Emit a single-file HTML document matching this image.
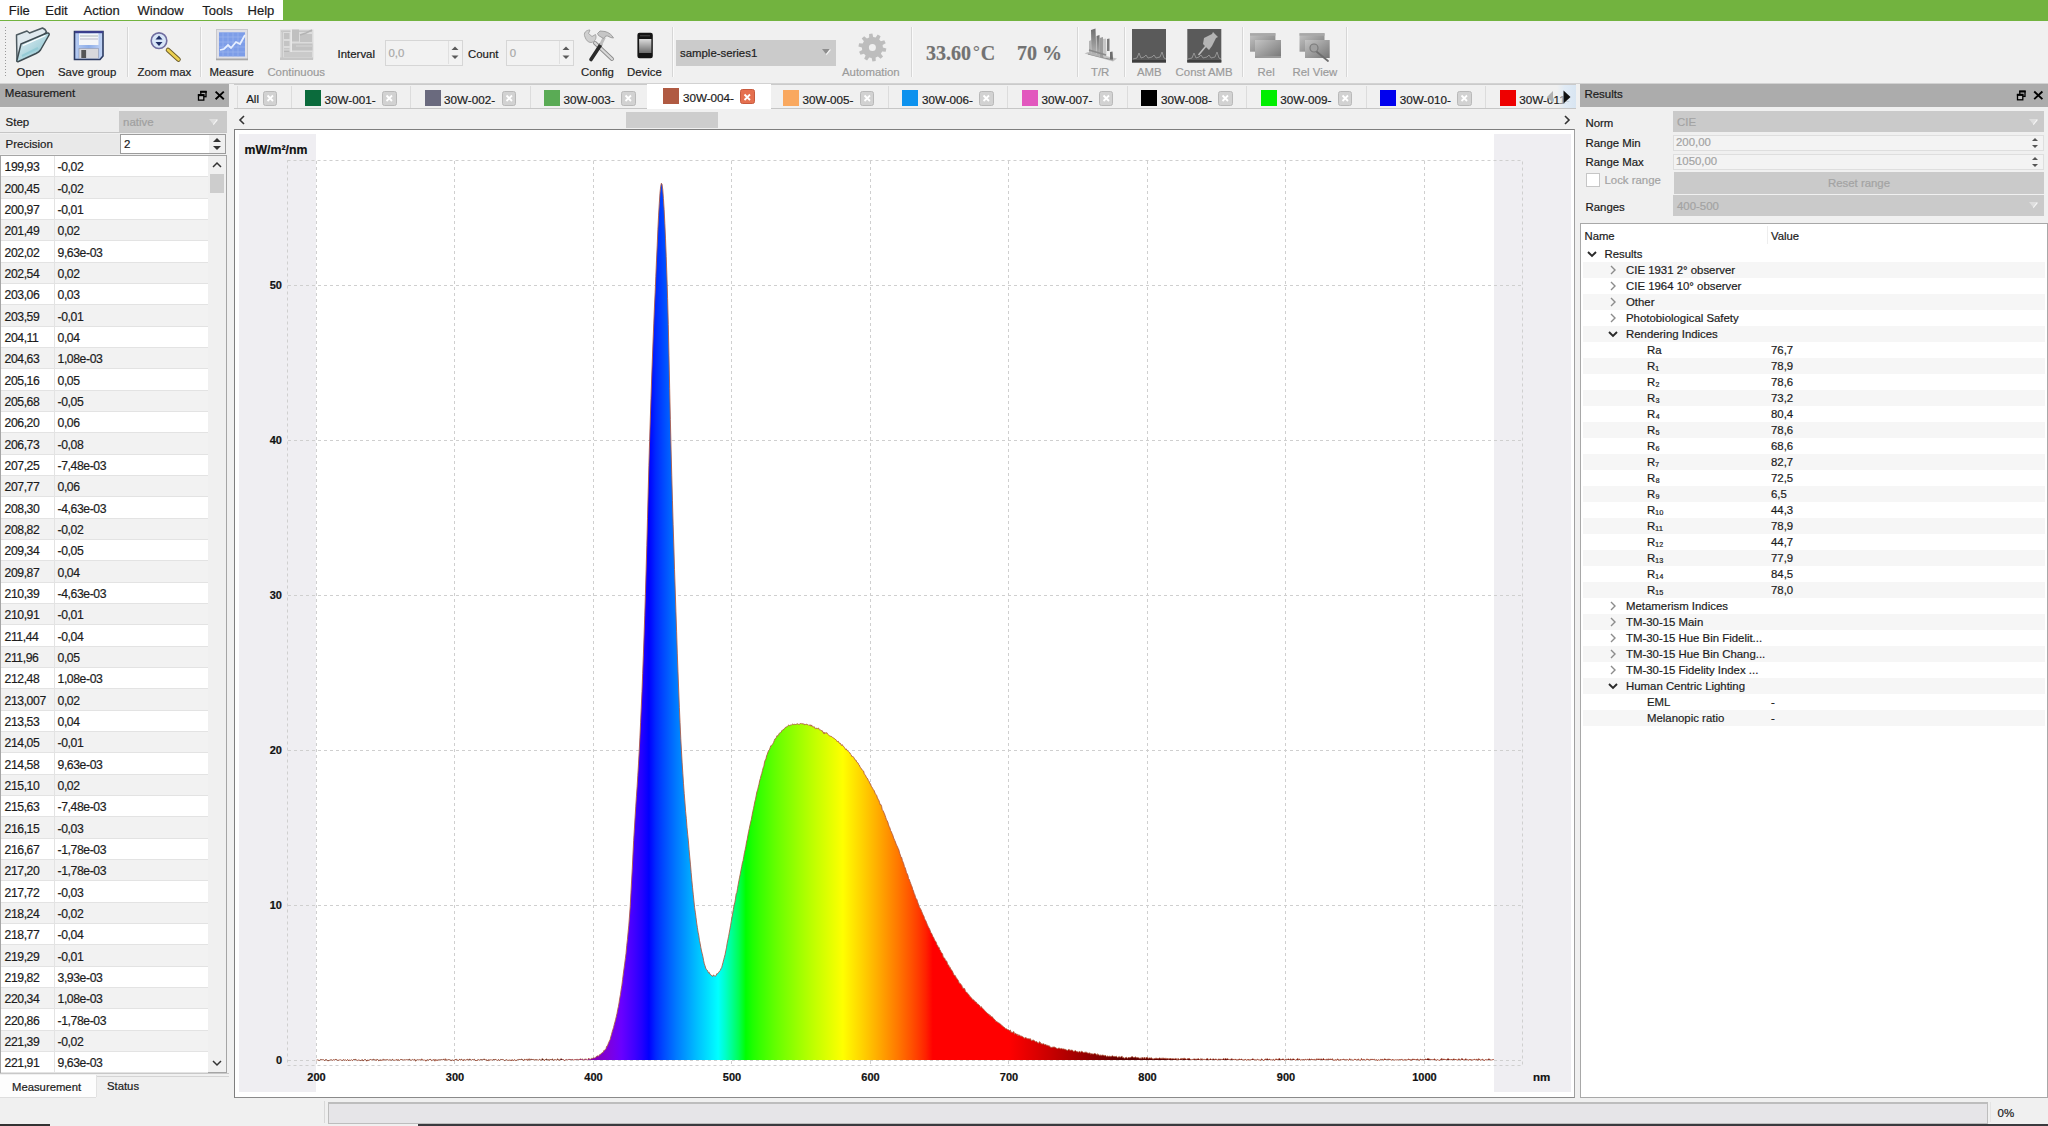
<!DOCTYPE html><html><head><meta charset="utf-8"><style>
html,body{margin:0;padding:0;width:2048px;height:1126px;overflow:hidden;background:#f0f0f0;position:relative;font-family:"Liberation Sans",sans-serif}
.t{position:absolute;white-space:nowrap;line-height:1;-webkit-text-stroke:0.2px currentColor;}
</style></head><body>
<div style="position:absolute;left:0px;top:0px;width:2048px;height:21px;background:#72b33f"></div>
<div style="position:absolute;left:0px;top:0px;width:283px;height:20px;background:#ffffff"></div>
<div class="t" style="left:8.8px;top:3.8px;font-size:13px;color:#1b1b1b;font-weight:400;">File</div>
<div class="t" style="left:45.3px;top:3.8px;font-size:13px;color:#1b1b1b;font-weight:400;">Edit</div>
<div class="t" style="left:83.6px;top:3.8px;font-size:13px;color:#1b1b1b;font-weight:400;">Action</div>
<div class="t" style="left:137.5px;top:3.8px;font-size:13px;color:#1b1b1b;font-weight:400;">Window</div>
<div class="t" style="left:202.3px;top:3.8px;font-size:13px;color:#1b1b1b;font-weight:400;">Tools</div>
<div class="t" style="left:247.6px;top:3.8px;font-size:13px;color:#1b1b1b;font-weight:400;">Help</div>
<div style="position:absolute;left:0px;top:21px;width:2048px;height:62px;background:#f0f0f0"></div>
<div style="position:absolute;left:0px;top:83px;width:2048px;height:1px;background:#d2d2d2"></div>
<div style="position:absolute;left:5px;top:27px;width:1px;height:51px;background:repeating-linear-gradient(#9a9a9a 0 1px,transparent 1px 3px)"></div>
<div style="position:absolute;left:127px;top:27px;width:1px;height:50px;background:#d6d6d6;box-shadow:1px 0 0 #fafafa"></div>
<div style="position:absolute;left:200px;top:27px;width:1px;height:50px;background:#d6d6d6;box-shadow:1px 0 0 #fafafa"></div>
<div style="position:absolute;left:671.6px;top:27px;width:1px;height:50px;background:#d6d6d6;box-shadow:1px 0 0 #fafafa"></div>
<div style="position:absolute;left:911.4px;top:27px;width:1px;height:50px;background:#d6d6d6;box-shadow:1px 0 0 #fafafa"></div>
<div style="position:absolute;left:1076.5px;top:27px;width:1px;height:50px;background:#d6d6d6;box-shadow:1px 0 0 #fafafa"></div>
<div style="position:absolute;left:1124.4px;top:27px;width:1px;height:50px;background:#d6d6d6;box-shadow:1px 0 0 #fafafa"></div>
<div style="position:absolute;left:1242px;top:27px;width:1px;height:50px;background:#d6d6d6;box-shadow:1px 0 0 #fafafa"></div>
<div style="position:absolute;left:1345.5px;top:27px;width:1px;height:50px;background:#d6d6d6;box-shadow:1px 0 0 #fafafa"></div>
<div class="t" style="left:16.6px;top:66.8px;font-size:11.4px;color:#1e1e1e;font-weight:400;">Open</div>
<div class="t" style="left:58.0px;top:66.8px;font-size:11.4px;color:#1e1e1e;font-weight:400;">Save group</div>
<div class="t" style="left:137.5px;top:66.8px;font-size:11.4px;color:#1e1e1e;font-weight:400;">Zoom max</div>
<div class="t" style="left:209.6px;top:66.8px;font-size:11.4px;color:#1e1e1e;font-weight:400;">Measure</div>
<div class="t" style="left:267.4px;top:66.8px;font-size:11.4px;color:#9b9b9b;font-weight:400;">Continuous</div>
<div class="t" style="left:581.0px;top:66.8px;font-size:11.4px;color:#1e1e1e;font-weight:400;">Config</div>
<div class="t" style="left:627.0px;top:66.8px;font-size:11.4px;color:#1e1e1e;font-weight:400;">Device</div>
<div class="t" style="left:842.0px;top:66.8px;font-size:11.4px;color:#9b9b9b;font-weight:400;">Automation</div>
<div class="t" style="left:1091.0px;top:66.8px;font-size:11.4px;color:#9b9b9b;font-weight:400;">T/R</div>
<div class="t" style="left:1137.0px;top:66.8px;font-size:11.4px;color:#9b9b9b;font-weight:400;">AMB</div>
<div class="t" style="left:1175.6px;top:66.8px;font-size:11.4px;color:#9b9b9b;font-weight:400;">Const AMB</div>
<div class="t" style="left:1257.6px;top:66.8px;font-size:11.4px;color:#9b9b9b;font-weight:400;">Rel</div>
<div class="t" style="left:1292.5px;top:66.8px;font-size:11.4px;color:#9b9b9b;font-weight:400;">Rel View</div>
<div class="t" style="left:337.6px;top:48.5px;font-size:11.4px;color:#1a1a1a;font-weight:400;">Interval</div>
<div class="t" style="left:468.0px;top:48.5px;font-size:11.4px;color:#1a1a1a;font-weight:400;">Count</div>
<div style="position:absolute;left:384.5px;top:39.5px;width:78.5px;height:26px;box-sizing:border-box;border:1px solid #d6d6d6;background:#f2f2f2"></div>
<div class="t" style="left:388.5px;top:48.3px;font-size:11.4px;color:#a8a8a8;font-weight:400;">0,0</div>
<svg style="position:absolute;left:450px;top:43px" width="10" height="20"><path d="M1.5,7 L5,3.5 L8.5,7 Z" fill="#5a5a5a"/><path d="M1.5,12.5 L5,16 L8.5,12.5 Z" fill="#5a5a5a"/></svg>
<div style="position:absolute;left:448px;top:41px;width:1px;height:23px;background:#e0e0e0"></div>
<div style="position:absolute;left:505.8px;top:39.5px;width:68.19999999999999px;height:26px;box-sizing:border-box;border:1px solid #d6d6d6;background:#f2f2f2"></div>
<div class="t" style="left:509.8px;top:48.3px;font-size:11.4px;color:#a8a8a8;font-weight:400;">0</div>
<svg style="position:absolute;left:561px;top:43px" width="10" height="20"><path d="M1.5,7 L5,3.5 L8.5,7 Z" fill="#5a5a5a"/><path d="M1.5,12.5 L5,16 L8.5,12.5 Z" fill="#5a5a5a"/></svg>
<div style="position:absolute;left:559px;top:41px;width:1px;height:23px;background:#e0e0e0"></div>
<div style="position:absolute;left:675.6px;top:39.5px;width:160.7px;height:26px;background:#cbcbcb"></div>
<div class="t" style="left:680.0px;top:47.8px;font-size:11.4px;color:#1e1e1e;font-weight:400;">sample-series1</div>
<svg style="position:absolute;left:820px;top:47px" width="12" height="10"><path d="M2,2 L10,2 L6,7 Z" fill="#8e8e8e"/><path d="M6,7 L10,2 L10.8,3 L6.5,8.2 Z" fill="#f4f4f4"/></svg>
<div class="t" style="left:926px;top:42.5px;font-family:'Liberation Serif',serif;font-size:20px;font-weight:700;color:#727272">33.60<span style="font-size:17px;position:relative;top:-3px;margin:0 1px 0 2px;font-weight:400">°</span>C</div>
<div class="t" style="left:1017px;top:42.5px;font-family:'Liberation Serif',serif;font-size:20px;font-weight:700;color:#727272">70 %</div>
<svg style="position:absolute;left:0;top:0" width="1400" height="84" viewBox="0 0 1400 84">
<defs>
<linearGradient id="fold" x1="0" y1="0" x2="1" y2="1"><stop offset="0" stop-color="#e8f2f6"/><stop offset="0.6" stop-color="#a9d3dc"/><stop offset="1" stop-color="#7fb3c4"/></linearGradient>
<linearGradient id="flop" x1="0" y1="0" x2="1" y2="0"><stop offset="0" stop-color="#b8cdf4"/><stop offset="0.5" stop-color="#8eaee8"/><stop offset="1" stop-color="#c4d6f6"/></linearGradient>
<linearGradient id="phone" x1="0" y1="0" x2="0" y2="1"><stop offset="0" stop-color="#dcdcdc"/><stop offset="1" stop-color="#6c6c6c"/></linearGradient>
<linearGradient id="win" x1="0" y1="0" x2="1" y2="1"><stop offset="0" stop-color="#c4c4c4"/><stop offset="1" stop-color="#767676"/></linearGradient>
<linearGradient id="bars" x1="0" y1="0" x2="1" y2="0"><stop offset="0" stop-color="#9a9a9a"/><stop offset="1" stop-color="#dcdcdc"/></linearGradient>
</defs>
<!-- Open folder -->
<path d="M16.5,35 L27,31 L29.5,33 L42.5,28 L45,29.5 L46.5,32 L21,56 L17,61 Z" fill="#dfe9ee" stroke="#4d5a60" stroke-width="1.5" stroke-linejoin="round"/>
<path d="M21,44 L47,33 C49,32.5 50,34 48.5,36 L40.5,50 C39.5,51.5 38,52.5 36,53.5 L18.5,61.5 C17,62 16.5,61 17,60 Z" fill="url(#fold)" stroke="#3f4c52" stroke-width="1.5" stroke-linejoin="round"/>
<path d="M23,45.5 L45.5,35.5" stroke="#ffffff" stroke-width="1.3"/>
<path d="M22,56 L38,48" stroke="#8fc9d4" stroke-width="2" opacity="0.8"/>
<!-- Floppy -->
<path d="M74.5,31.5 H103 V56 L100,59.5 H74.5 Z" fill="url(#flop)" stroke="#2c3b62" stroke-width="1.6"/>
<rect x="75" y="31" width="28" height="2.2" fill="#3b3f8c"/>
<rect x="79" y="33.5" width="19.5" height="11.5" fill="#f4f6f8"/>
<line x1="80" y1="36" x2="98" y2="36" stroke="#9aa" stroke-width="0.8"/>
<line x1="80" y1="39" x2="98" y2="39" stroke="#aab" stroke-width="0.8"/>
<rect x="79" y="48.5" width="19.5" height="10" fill="#d8d8dc" stroke="#9098b0" stroke-width="0.6"/>
<rect x="81.3" y="50" width="4.8" height="8" fill="#555"/>
<!-- Zoom max -->
<line x1="168" y1="50" x2="178.5" y2="59.5" stroke="#6a5a28" stroke-width="4.6" stroke-linecap="round"/>
<line x1="168" y1="50" x2="178.5" y2="59.5" stroke="#ecd050" stroke-width="2.8" stroke-linecap="round"/>
<circle cx="159" cy="40.7" r="7.8" fill="#d8e6f8" stroke="#706ea0" stroke-width="1.6"/>
<path d="M159,35.5 L162.5,39.5 H155.5 Z" fill="#1e2e66"/>
<path d="M159,46 L162.5,42 H155.5 Z" fill="#1e2e66"/>
<!-- Measure -->
<rect x="216.5" y="29.5" width="31" height="30" fill="#e0e0e6" stroke="#c8c8cc" stroke-width="1"/>
<rect x="219" y="32.3" width="26" height="24.2" fill="#7d9de8"/>
<g stroke="#9cb4ee" stroke-width="0.7"><line x1="223" y1="32" x2="223" y2="56.5"/><line x1="228" y1="32" x2="228" y2="56.5"/><line x1="233" y1="32" x2="233" y2="56.5"/><line x1="238" y1="32" x2="238" y2="56.5"/><line x1="219" y1="37" x2="245" y2="37"/><line x1="219" y1="42" x2="245" y2="42"/><line x1="219" y1="47" x2="245" y2="47"/><line x1="219" y1="52" x2="245" y2="52"/></g>
<path d="M220,50 L224,49 L228,45 L231,48 L236,42 L240,44 L245,35" fill="none" stroke="#e8f0ff" stroke-width="1.8"/>
<rect x="216" y="58.5" width="32" height="1.8" fill="#a8a8a8"/>
<!-- Continuous (disabled) -->
<rect x="280" y="29.5" width="33.5" height="30" fill="#dcdcdc"/>
<rect x="281" y="30.5" width="31" height="1.5" fill="#c4c4c4"/>
<rect x="281.5" y="31" width="1.6" height="27" fill="#c8c8c8"/>
<rect x="284" y="33" width="5.5" height="6" fill="#c2c2c2"/>
<rect x="284" y="41" width="5.5" height="5" fill="#c4c4c4"/>
<rect x="284" y="48" width="5.5" height="1.5" fill="#c8c8c8"/>
<rect x="284" y="50.5" width="5.5" height="2.5" fill="#b8b8b8"/>
<rect x="290.5" y="29" width="1.5" height="27" fill="#e8e8e8"/>
<rect x="292" y="29.5" width="7" height="12" fill="#c0c0c0"/>
<rect x="300" y="34" width="12" height="8" fill="#c4c4c4"/>
<path d="M300,35 L306,33 L312,30" fill="none" stroke="#b4b4b4" stroke-width="1.6"/>
<rect x="292" y="43.5" width="20.5" height="7" fill="#c2c2c2"/>
<rect x="296" y="45.5" width="16" height="1" fill="#d6d6d6"/>
<rect x="284" y="52" width="28" height="5" fill="#cacaca"/>
<rect x="280" y="57.5" width="33" height="2.5" fill="#c6c6c6"/>
<!-- Config: wrench + hammer -->
<line x1="595" y1="43" x2="612" y2="59" stroke="#8c8c8c" stroke-width="4" stroke-linecap="round"/>
<line x1="595" y1="43" x2="612" y2="59" stroke="#d8d8d8" stroke-width="2.2" stroke-linecap="round"/>
<path d="M585,37 C583,33 586,30 590,30 L588.5,33.5 L592,36.5 L595.5,34.5 C597,38 595,42 591,42.5 C588,42.5 586,40 585,37 Z" fill="#cfcfcf" stroke="#a0a0a0" stroke-width="0.9"/>
<line x1="600.5" y1="45" x2="591" y2="59.5" stroke="#2b2b2b" stroke-width="3.6" stroke-linecap="round"/>
<line x1="600.5" y1="45" x2="604.5" y2="37" stroke="#bdbdbd" stroke-width="3"/>
<path d="M597.5,33.5 L600,31 L605,31.5 C609,32.5 612,35 613.5,38 L610.5,37.5 C608.5,36 606.5,35.5 605,36.5 L603.5,38.5 L598.5,35.5 Z" fill="#c6c6c6" stroke="#9a9a9a" stroke-width="0.9"/>
<!-- Device phone -->
<rect x="637.4" y="32.8" width="15.4" height="25.5" rx="2.2" fill="#141414"/>
<rect x="639.1" y="39" width="12.3" height="14" fill="url(#phone)"/>
<rect x="640" y="35" width="10" height="1.4" fill="#3c3c3c"/>
<!-- Gear -->
<g transform="translate(872.4,47.5)" fill="#bdbdbd">
<path fill-rule="evenodd" d="M10.50,0.00 L13.96,1.05 L13.31,4.33 L9.71,3.99 L8.49,6.17 L10.67,9.06 L8.23,11.33 L5.51,8.94 L3.24,9.99 L3.31,13.60 L0.00,14.00 L-0.79,10.47 L-3.24,9.99 L-5.32,12.95 L-8.23,11.33 L-6.79,8.01 L-8.49,6.17 L-11.91,7.35 L-13.31,4.33 L-10.20,2.48 L-10.50,0.00 L-13.96,-1.05 L-13.31,-4.33 L-9.71,-3.99 L-8.49,-6.17 L-10.67,-9.06 L-8.23,-11.33 L-5.51,-8.94 L-3.24,-9.99 L-3.31,-13.60 L-0.00,-14.00 L0.79,-10.47 L3.24,-9.99 L5.32,-12.95 L8.23,-11.33 L6.79,-8.01 L8.49,-6.17 L11.91,-7.35 L13.31,-4.33 L10.20,-2.48 Z M3.5,0 A3.5,3.5 0 1,0 -3.5,0 A3.5,3.5 0 1,0 3.5,0 Z"/>
</g>
<!-- T/R -->
<defs><linearGradient id="trb" x1="0" y1="0" x2="0" y2="1"><stop offset="0" stop-color="#6e6e6e"/><stop offset="1" stop-color="#b8b8b8"/></linearGradient></defs>
<path d="M1084.5,53.5 L1088,52 L1117,58.5 L1113,61.5 Z" fill="#c2c2c2"/>
<path d="M1088,54 L1113,60" stroke="#8e8e8e" stroke-width="1.2"/>
<path d="M1089,41 L1091.5,40 L1091.5,55 L1089,54 Z" fill="#b4b4b4"/>
<path d="M1091,30 L1095.5,28.6 L1096.5,56 L1091.5,55 Z" fill="url(#trb)"/>
<path d="M1096.5,36 L1099.5,35 L1100,57 L1096.5,56 Z" fill="url(#trb)"/>
<path d="M1099.5,38 L1103,37 L1103.5,57.5 L1100,57 Z" fill="#9c9c9c"/>
<path d="M1103,39 L1106,38.5 L1106.5,58 L1103.5,57.5 Z" fill="#c6c6c6"/>
<path d="M1107,39 L1109.5,38.5 L1109.5,51 L1107,51 Z" fill="#7a7a7a"/>
<path d="M1110,52 L1112.5,51.5 L1113,59.5 L1110,59 Z" fill="#6e6e6e"/>
<path d="M1089,50 L1106,55" stroke="#8a8a8a" stroke-width="1.5"/>
<!-- AMB -->
<rect x="1132" y="29" width="34" height="33.5" fill="#5a5a5a"/>
<rect x="1132" y="60" width="34" height="2.5" fill="#3e3e3e"/>
<path d="M1133,59 L1137,58 L1139,53 L1141,58 L1144,57 L1146,55 L1148,58 L1152,57 L1154,55 L1156,58 L1160,57 L1162,52 L1164,58 L1166,59" fill="none" stroke="#9a9a9a" stroke-width="0.9"/>
<!-- Const AMB -->
<rect x="1187.3" y="29" width="34" height="33.5" fill="#5a5a5a"/>
<rect x="1187.3" y="60" width="34" height="2.5" fill="#3e3e3e"/>
<path d="M1188,59 L1192,58 L1194,53 L1196,58 L1199,57 L1201,55 L1203,58 L1207,57 L1209,55 L1211,58 L1215,57 L1217,52 L1219,58 L1221,59" fill="none" stroke="#9a9a9a" stroke-width="0.9"/>
<line x1="1198.5" y1="55" x2="1206" y2="46" stroke="#bcbcbc" stroke-width="1.6"/>
<path d="M1203,44 L1209,50 L1212,46 L1216,38 L1218,37 L1213,32 L1212,34 L1204,38 Z" fill="#b4b4b4"/>
<!-- Rel -->
<rect x="1250" y="33.2" width="25.4" height="18.5" fill="url(#win)"/>
<rect x="1250" y="33.2" width="25.4" height="2.5" fill="#a8a8a8"/>
<rect x="1255" y="40" width="26" height="18" fill="url(#win)"/>
<rect x="1255" y="56" width="26" height="2" fill="#9a9a9a"/>
<!-- Rel View -->
<rect x="1299.5" y="33.2" width="25" height="18.5" fill="url(#win)"/>
<rect x="1299.5" y="33.2" width="25" height="2.5" fill="#a8a8a8"/>
<rect x="1305" y="40" width="24.7" height="18" fill="url(#win)"/>
<circle cx="1314" cy="48" r="4" fill="#a0a0a0" stroke="#7a7a7a" stroke-width="1.2"/>
<line x1="1317" y1="52" x2="1328" y2="61" stroke="#6e6e6e" stroke-width="1.8" stroke-linecap="round"/>
</svg>

<div style="position:absolute;left:0px;top:84px;width:229px;height:23px;background:#acacac"></div>
<div class="t" style="left:4.8px;top:88.3px;font-size:11.5px;color:#1c1c1c;font-weight:400;">Measurement</div>
<svg style="position:absolute;left:0;top:0" width="2048" height="110"><rect x="200.8" y="91.5" width="5.2" height="5.2" fill="none" stroke="#000" stroke-width="1.3"/><rect x="200.20000000000002" y="90.9" width="6.5" height="1.9" fill="#000"/><rect x="198.5" y="94.8" width="5.3" height="5.3" fill="#b8b8b8" stroke="#000" stroke-width="1.3"/><rect x="197.9" y="94.2" width="6.5" height="2" fill="#000"/><path d="M215.6,91.6 L223.79999999999998,99.19999999999999 M223.79999999999998,91.6 L215.6,99.19999999999999" stroke="#000" stroke-width="1.9"/></svg>
<div style="position:absolute;left:0px;top:108px;width:119px;height:25px;background:#ededed"></div>
<div style="position:absolute;left:0px;top:134px;width:120px;height:20px;background:#e9e9e9"></div>
<div class="t" style="left:5.6px;top:117.3px;font-size:11.5px;color:#1c1c1c;font-weight:400;">Step</div>
<div style="position:absolute;left:119px;top:111px;width:107.5px;height:22px;background:#cacaca"></div>
<div class="t" style="left:123.0px;top:117.3px;font-size:11.5px;color:#a0a0a0;font-weight:400;">native</div>
<svg style="position:absolute;left:207px;top:117px" width="12" height="10"><path d="M2,2 L10,2 L6,7 Z" fill="#dedede"/><path d="M6,7 L10,2 L10.8,3 L6.5,8.2 Z" fill="#f6f6f6"/></svg>
<div style="position:absolute;left:0px;top:132px;width:227px;height:1.2px;background:#c6c6c6"></div>
<div class="t" style="left:5.6px;top:139.3px;font-size:11.5px;color:#1c1c1c;font-weight:400;">Precision</div>
<div style="position:absolute;left:120px;top:134px;width:106px;height:20px;box-sizing:border-box;border:1px solid #9c9c9c;background:#fff"></div>
<div class="t" style="left:124.0px;top:139.3px;font-size:11.5px;color:#1c1c1c;font-weight:400;">2</div>
<svg style="position:absolute;left:209px;top:135px" width="16" height="18"><rect x="0" y="0" width="16" height="18" fill="#f0f0f0"/><path d="M4,7 L8,3 L12,7 Z" fill="#333"/><path d="M4,11 L8,15 L12,11 Z" fill="#333"/></svg>
<div style="position:absolute;left:0px;top:155px;width:227px;height:918px;box-sizing:border-box;border:1px solid #a5a5a5;background:#fff"></div>
<div style="position:absolute;left:1px;top:176.3px;width:207px;height:1px;background:#e3e3e3"></div>
<div class="t" style="left:4.5px;top:161.3px;font-size:12.2px;color:#1c1c1c;font-weight:400;letter-spacing:-0.4px">199,93</div>
<div class="t" style="left:57.5px;top:161.3px;font-size:12.2px;color:#1c1c1c;font-weight:400;letter-spacing:-0.4px">-0,02</div>
<div style="position:absolute;left:1px;top:177.3px;width:207px;height:21.33px;background:#f2f2f2"></div>
<div style="position:absolute;left:1px;top:197.7px;width:207px;height:1px;background:#e3e3e3"></div>
<div class="t" style="left:4.5px;top:182.6px;font-size:12.2px;color:#1c1c1c;font-weight:400;letter-spacing:-0.4px">200,45</div>
<div class="t" style="left:57.5px;top:182.6px;font-size:12.2px;color:#1c1c1c;font-weight:400;letter-spacing:-0.4px">-0,02</div>
<div style="position:absolute;left:1px;top:219.0px;width:207px;height:1px;background:#e3e3e3"></div>
<div class="t" style="left:4.5px;top:203.9px;font-size:12.2px;color:#1c1c1c;font-weight:400;letter-spacing:-0.4px">200,97</div>
<div class="t" style="left:57.5px;top:203.9px;font-size:12.2px;color:#1c1c1c;font-weight:400;letter-spacing:-0.4px">-0,01</div>
<div style="position:absolute;left:1px;top:220.0px;width:207px;height:21.33px;background:#f2f2f2"></div>
<div style="position:absolute;left:1px;top:240.3px;width:207px;height:1px;background:#e3e3e3"></div>
<div class="t" style="left:4.5px;top:225.3px;font-size:12.2px;color:#1c1c1c;font-weight:400;letter-spacing:-0.4px">201,49</div>
<div class="t" style="left:57.5px;top:225.3px;font-size:12.2px;color:#1c1c1c;font-weight:400;letter-spacing:-0.4px">0,02</div>
<div style="position:absolute;left:1px;top:261.6px;width:207px;height:1px;background:#e3e3e3"></div>
<div class="t" style="left:4.5px;top:246.6px;font-size:12.2px;color:#1c1c1c;font-weight:400;letter-spacing:-0.4px">202,02</div>
<div class="t" style="left:57.5px;top:246.6px;font-size:12.2px;color:#1c1c1c;font-weight:400;letter-spacing:-0.4px">9,63e-03</div>
<div style="position:absolute;left:1px;top:262.6px;width:207px;height:21.33px;background:#f2f2f2"></div>
<div style="position:absolute;left:1px;top:283.0px;width:207px;height:1px;background:#e3e3e3"></div>
<div class="t" style="left:4.5px;top:267.9px;font-size:12.2px;color:#1c1c1c;font-weight:400;letter-spacing:-0.4px">202,54</div>
<div class="t" style="left:57.5px;top:267.9px;font-size:12.2px;color:#1c1c1c;font-weight:400;letter-spacing:-0.4px">0,02</div>
<div style="position:absolute;left:1px;top:304.3px;width:207px;height:1px;background:#e3e3e3"></div>
<div class="t" style="left:4.5px;top:289.3px;font-size:12.2px;color:#1c1c1c;font-weight:400;letter-spacing:-0.4px">203,06</div>
<div class="t" style="left:57.5px;top:289.3px;font-size:12.2px;color:#1c1c1c;font-weight:400;letter-spacing:-0.4px">0,03</div>
<div style="position:absolute;left:1px;top:305.3px;width:207px;height:21.33px;background:#f2f2f2"></div>
<div style="position:absolute;left:1px;top:325.6px;width:207px;height:1px;background:#e3e3e3"></div>
<div class="t" style="left:4.5px;top:310.6px;font-size:12.2px;color:#1c1c1c;font-weight:400;letter-spacing:-0.4px">203,59</div>
<div class="t" style="left:57.5px;top:310.6px;font-size:12.2px;color:#1c1c1c;font-weight:400;letter-spacing:-0.4px">-0,01</div>
<div style="position:absolute;left:1px;top:347.0px;width:207px;height:1px;background:#e3e3e3"></div>
<div class="t" style="left:4.5px;top:331.9px;font-size:12.2px;color:#1c1c1c;font-weight:400;letter-spacing:-0.4px">204,11</div>
<div class="t" style="left:57.5px;top:331.9px;font-size:12.2px;color:#1c1c1c;font-weight:400;letter-spacing:-0.4px">0,04</div>
<div style="position:absolute;left:1px;top:348.0px;width:207px;height:21.33px;background:#f2f2f2"></div>
<div style="position:absolute;left:1px;top:368.3px;width:207px;height:1px;background:#e3e3e3"></div>
<div class="t" style="left:4.5px;top:353.2px;font-size:12.2px;color:#1c1c1c;font-weight:400;letter-spacing:-0.4px">204,63</div>
<div class="t" style="left:57.5px;top:353.2px;font-size:12.2px;color:#1c1c1c;font-weight:400;letter-spacing:-0.4px">1,08e-03</div>
<div style="position:absolute;left:1px;top:389.6px;width:207px;height:1px;background:#e3e3e3"></div>
<div class="t" style="left:4.5px;top:374.6px;font-size:12.2px;color:#1c1c1c;font-weight:400;letter-spacing:-0.4px">205,16</div>
<div class="t" style="left:57.5px;top:374.6px;font-size:12.2px;color:#1c1c1c;font-weight:400;letter-spacing:-0.4px">0,05</div>
<div style="position:absolute;left:1px;top:390.6px;width:207px;height:21.33px;background:#f2f2f2"></div>
<div style="position:absolute;left:1px;top:411.0px;width:207px;height:1px;background:#e3e3e3"></div>
<div class="t" style="left:4.5px;top:395.9px;font-size:12.2px;color:#1c1c1c;font-weight:400;letter-spacing:-0.4px">205,68</div>
<div class="t" style="left:57.5px;top:395.9px;font-size:12.2px;color:#1c1c1c;font-weight:400;letter-spacing:-0.4px">-0,05</div>
<div style="position:absolute;left:1px;top:432.3px;width:207px;height:1px;background:#e3e3e3"></div>
<div class="t" style="left:4.5px;top:417.2px;font-size:12.2px;color:#1c1c1c;font-weight:400;letter-spacing:-0.4px">206,20</div>
<div class="t" style="left:57.5px;top:417.2px;font-size:12.2px;color:#1c1c1c;font-weight:400;letter-spacing:-0.4px">0,06</div>
<div style="position:absolute;left:1px;top:433.3px;width:207px;height:21.33px;background:#f2f2f2"></div>
<div style="position:absolute;left:1px;top:453.6px;width:207px;height:1px;background:#e3e3e3"></div>
<div class="t" style="left:4.5px;top:438.6px;font-size:12.2px;color:#1c1c1c;font-weight:400;letter-spacing:-0.4px">206,73</div>
<div class="t" style="left:57.5px;top:438.6px;font-size:12.2px;color:#1c1c1c;font-weight:400;letter-spacing:-0.4px">-0,08</div>
<div style="position:absolute;left:1px;top:474.9px;width:207px;height:1px;background:#e3e3e3"></div>
<div class="t" style="left:4.5px;top:459.9px;font-size:12.2px;color:#1c1c1c;font-weight:400;letter-spacing:-0.4px">207,25</div>
<div class="t" style="left:57.5px;top:459.9px;font-size:12.2px;color:#1c1c1c;font-weight:400;letter-spacing:-0.4px">-7,48e-03</div>
<div style="position:absolute;left:1px;top:475.9px;width:207px;height:21.33px;background:#f2f2f2"></div>
<div style="position:absolute;left:1px;top:496.3px;width:207px;height:1px;background:#e3e3e3"></div>
<div class="t" style="left:4.5px;top:481.2px;font-size:12.2px;color:#1c1c1c;font-weight:400;letter-spacing:-0.4px">207,77</div>
<div class="t" style="left:57.5px;top:481.2px;font-size:12.2px;color:#1c1c1c;font-weight:400;letter-spacing:-0.4px">0,06</div>
<div style="position:absolute;left:1px;top:517.6px;width:207px;height:1px;background:#e3e3e3"></div>
<div class="t" style="left:4.5px;top:502.6px;font-size:12.2px;color:#1c1c1c;font-weight:400;letter-spacing:-0.4px">208,30</div>
<div class="t" style="left:57.5px;top:502.6px;font-size:12.2px;color:#1c1c1c;font-weight:400;letter-spacing:-0.4px">-4,63e-03</div>
<div style="position:absolute;left:1px;top:518.6px;width:207px;height:21.33px;background:#f2f2f2"></div>
<div style="position:absolute;left:1px;top:538.9px;width:207px;height:1px;background:#e3e3e3"></div>
<div class="t" style="left:4.5px;top:523.9px;font-size:12.2px;color:#1c1c1c;font-weight:400;letter-spacing:-0.4px">208,82</div>
<div class="t" style="left:57.5px;top:523.9px;font-size:12.2px;color:#1c1c1c;font-weight:400;letter-spacing:-0.4px">-0,02</div>
<div style="position:absolute;left:1px;top:560.3px;width:207px;height:1px;background:#e3e3e3"></div>
<div class="t" style="left:4.5px;top:545.2px;font-size:12.2px;color:#1c1c1c;font-weight:400;letter-spacing:-0.4px">209,34</div>
<div class="t" style="left:57.5px;top:545.2px;font-size:12.2px;color:#1c1c1c;font-weight:400;letter-spacing:-0.4px">-0,05</div>
<div style="position:absolute;left:1px;top:561.3px;width:207px;height:21.33px;background:#f2f2f2"></div>
<div style="position:absolute;left:1px;top:581.6px;width:207px;height:1px;background:#e3e3e3"></div>
<div class="t" style="left:4.5px;top:566.5px;font-size:12.2px;color:#1c1c1c;font-weight:400;letter-spacing:-0.4px">209,87</div>
<div class="t" style="left:57.5px;top:566.5px;font-size:12.2px;color:#1c1c1c;font-weight:400;letter-spacing:-0.4px">0,04</div>
<div style="position:absolute;left:1px;top:602.9px;width:207px;height:1px;background:#e3e3e3"></div>
<div class="t" style="left:4.5px;top:587.9px;font-size:12.2px;color:#1c1c1c;font-weight:400;letter-spacing:-0.4px">210,39</div>
<div class="t" style="left:57.5px;top:587.9px;font-size:12.2px;color:#1c1c1c;font-weight:400;letter-spacing:-0.4px">-4,63e-03</div>
<div style="position:absolute;left:1px;top:603.9px;width:207px;height:21.33px;background:#f2f2f2"></div>
<div style="position:absolute;left:1px;top:624.3px;width:207px;height:1px;background:#e3e3e3"></div>
<div class="t" style="left:4.5px;top:609.2px;font-size:12.2px;color:#1c1c1c;font-weight:400;letter-spacing:-0.4px">210,91</div>
<div class="t" style="left:57.5px;top:609.2px;font-size:12.2px;color:#1c1c1c;font-weight:400;letter-spacing:-0.4px">-0,01</div>
<div style="position:absolute;left:1px;top:645.6px;width:207px;height:1px;background:#e3e3e3"></div>
<div class="t" style="left:4.5px;top:630.5px;font-size:12.2px;color:#1c1c1c;font-weight:400;letter-spacing:-0.4px">211,44</div>
<div class="t" style="left:57.5px;top:630.5px;font-size:12.2px;color:#1c1c1c;font-weight:400;letter-spacing:-0.4px">-0,04</div>
<div style="position:absolute;left:1px;top:646.6px;width:207px;height:21.33px;background:#f2f2f2"></div>
<div style="position:absolute;left:1px;top:666.9px;width:207px;height:1px;background:#e3e3e3"></div>
<div class="t" style="left:4.5px;top:651.9px;font-size:12.2px;color:#1c1c1c;font-weight:400;letter-spacing:-0.4px">211,96</div>
<div class="t" style="left:57.5px;top:651.9px;font-size:12.2px;color:#1c1c1c;font-weight:400;letter-spacing:-0.4px">0,05</div>
<div style="position:absolute;left:1px;top:688.2px;width:207px;height:1px;background:#e3e3e3"></div>
<div class="t" style="left:4.5px;top:673.2px;font-size:12.2px;color:#1c1c1c;font-weight:400;letter-spacing:-0.4px">212,48</div>
<div class="t" style="left:57.5px;top:673.2px;font-size:12.2px;color:#1c1c1c;font-weight:400;letter-spacing:-0.4px">1,08e-03</div>
<div style="position:absolute;left:1px;top:689.2px;width:207px;height:21.33px;background:#f2f2f2"></div>
<div style="position:absolute;left:1px;top:709.6px;width:207px;height:1px;background:#e3e3e3"></div>
<div class="t" style="left:4.5px;top:694.5px;font-size:12.2px;color:#1c1c1c;font-weight:400;letter-spacing:-0.4px">213,007</div>
<div class="t" style="left:57.5px;top:694.5px;font-size:12.2px;color:#1c1c1c;font-weight:400;letter-spacing:-0.4px">0,02</div>
<div style="position:absolute;left:1px;top:730.9px;width:207px;height:1px;background:#e3e3e3"></div>
<div class="t" style="left:4.5px;top:715.9px;font-size:12.2px;color:#1c1c1c;font-weight:400;letter-spacing:-0.4px">213,53</div>
<div class="t" style="left:57.5px;top:715.9px;font-size:12.2px;color:#1c1c1c;font-weight:400;letter-spacing:-0.4px">0,04</div>
<div style="position:absolute;left:1px;top:731.9px;width:207px;height:21.33px;background:#f2f2f2"></div>
<div style="position:absolute;left:1px;top:752.2px;width:207px;height:1px;background:#e3e3e3"></div>
<div class="t" style="left:4.5px;top:737.2px;font-size:12.2px;color:#1c1c1c;font-weight:400;letter-spacing:-0.4px">214,05</div>
<div class="t" style="left:57.5px;top:737.2px;font-size:12.2px;color:#1c1c1c;font-weight:400;letter-spacing:-0.4px">-0,01</div>
<div style="position:absolute;left:1px;top:773.6px;width:207px;height:1px;background:#e3e3e3"></div>
<div class="t" style="left:4.5px;top:758.5px;font-size:12.2px;color:#1c1c1c;font-weight:400;letter-spacing:-0.4px">214,58</div>
<div class="t" style="left:57.5px;top:758.5px;font-size:12.2px;color:#1c1c1c;font-weight:400;letter-spacing:-0.4px">9,63e-03</div>
<div style="position:absolute;left:1px;top:774.6px;width:207px;height:21.33px;background:#f2f2f2"></div>
<div style="position:absolute;left:1px;top:794.9px;width:207px;height:1px;background:#e3e3e3"></div>
<div class="t" style="left:4.5px;top:779.8px;font-size:12.2px;color:#1c1c1c;font-weight:400;letter-spacing:-0.4px">215,10</div>
<div class="t" style="left:57.5px;top:779.8px;font-size:12.2px;color:#1c1c1c;font-weight:400;letter-spacing:-0.4px">0,02</div>
<div style="position:absolute;left:1px;top:816.2px;width:207px;height:1px;background:#e3e3e3"></div>
<div class="t" style="left:4.5px;top:801.2px;font-size:12.2px;color:#1c1c1c;font-weight:400;letter-spacing:-0.4px">215,63</div>
<div class="t" style="left:57.5px;top:801.2px;font-size:12.2px;color:#1c1c1c;font-weight:400;letter-spacing:-0.4px">-7,48e-03</div>
<div style="position:absolute;left:1px;top:817.2px;width:207px;height:21.33px;background:#f2f2f2"></div>
<div style="position:absolute;left:1px;top:837.6px;width:207px;height:1px;background:#e3e3e3"></div>
<div class="t" style="left:4.5px;top:822.5px;font-size:12.2px;color:#1c1c1c;font-weight:400;letter-spacing:-0.4px">216,15</div>
<div class="t" style="left:57.5px;top:822.5px;font-size:12.2px;color:#1c1c1c;font-weight:400;letter-spacing:-0.4px">-0,03</div>
<div style="position:absolute;left:1px;top:858.9px;width:207px;height:1px;background:#e3e3e3"></div>
<div class="t" style="left:4.5px;top:843.8px;font-size:12.2px;color:#1c1c1c;font-weight:400;letter-spacing:-0.4px">216,67</div>
<div class="t" style="left:57.5px;top:843.8px;font-size:12.2px;color:#1c1c1c;font-weight:400;letter-spacing:-0.4px">-1,78e-03</div>
<div style="position:absolute;left:1px;top:859.9px;width:207px;height:21.33px;background:#f2f2f2"></div>
<div style="position:absolute;left:1px;top:880.2px;width:207px;height:1px;background:#e3e3e3"></div>
<div class="t" style="left:4.5px;top:865.2px;font-size:12.2px;color:#1c1c1c;font-weight:400;letter-spacing:-0.4px">217,20</div>
<div class="t" style="left:57.5px;top:865.2px;font-size:12.2px;color:#1c1c1c;font-weight:400;letter-spacing:-0.4px">-1,78e-03</div>
<div style="position:absolute;left:1px;top:901.5px;width:207px;height:1px;background:#e3e3e3"></div>
<div class="t" style="left:4.5px;top:886.5px;font-size:12.2px;color:#1c1c1c;font-weight:400;letter-spacing:-0.4px">217,72</div>
<div class="t" style="left:57.5px;top:886.5px;font-size:12.2px;color:#1c1c1c;font-weight:400;letter-spacing:-0.4px">-0,03</div>
<div style="position:absolute;left:1px;top:902.5px;width:207px;height:21.33px;background:#f2f2f2"></div>
<div style="position:absolute;left:1px;top:922.9px;width:207px;height:1px;background:#e3e3e3"></div>
<div class="t" style="left:4.5px;top:907.8px;font-size:12.2px;color:#1c1c1c;font-weight:400;letter-spacing:-0.4px">218,24</div>
<div class="t" style="left:57.5px;top:907.8px;font-size:12.2px;color:#1c1c1c;font-weight:400;letter-spacing:-0.4px">-0,02</div>
<div style="position:absolute;left:1px;top:944.2px;width:207px;height:1px;background:#e3e3e3"></div>
<div class="t" style="left:4.5px;top:929.2px;font-size:12.2px;color:#1c1c1c;font-weight:400;letter-spacing:-0.4px">218,77</div>
<div class="t" style="left:57.5px;top:929.2px;font-size:12.2px;color:#1c1c1c;font-weight:400;letter-spacing:-0.4px">-0,04</div>
<div style="position:absolute;left:1px;top:945.2px;width:207px;height:21.33px;background:#f2f2f2"></div>
<div style="position:absolute;left:1px;top:965.5px;width:207px;height:1px;background:#e3e3e3"></div>
<div class="t" style="left:4.5px;top:950.5px;font-size:12.2px;color:#1c1c1c;font-weight:400;letter-spacing:-0.4px">219,29</div>
<div class="t" style="left:57.5px;top:950.5px;font-size:12.2px;color:#1c1c1c;font-weight:400;letter-spacing:-0.4px">-0,01</div>
<div style="position:absolute;left:1px;top:986.9px;width:207px;height:1px;background:#e3e3e3"></div>
<div class="t" style="left:4.5px;top:971.8px;font-size:12.2px;color:#1c1c1c;font-weight:400;letter-spacing:-0.4px">219,82</div>
<div class="t" style="left:57.5px;top:971.8px;font-size:12.2px;color:#1c1c1c;font-weight:400;letter-spacing:-0.4px">3,93e-03</div>
<div style="position:absolute;left:1px;top:987.9px;width:207px;height:21.33px;background:#f2f2f2"></div>
<div style="position:absolute;left:1px;top:1008.2px;width:207px;height:1px;background:#e3e3e3"></div>
<div class="t" style="left:4.5px;top:993.1px;font-size:12.2px;color:#1c1c1c;font-weight:400;letter-spacing:-0.4px">220,34</div>
<div class="t" style="left:57.5px;top:993.1px;font-size:12.2px;color:#1c1c1c;font-weight:400;letter-spacing:-0.4px">1,08e-03</div>
<div style="position:absolute;left:1px;top:1029.5px;width:207px;height:1px;background:#e3e3e3"></div>
<div class="t" style="left:4.5px;top:1014.5px;font-size:12.2px;color:#1c1c1c;font-weight:400;letter-spacing:-0.4px">220,86</div>
<div class="t" style="left:57.5px;top:1014.5px;font-size:12.2px;color:#1c1c1c;font-weight:400;letter-spacing:-0.4px">-1,78e-03</div>
<div style="position:absolute;left:1px;top:1030.5px;width:207px;height:21.33px;background:#f2f2f2"></div>
<div style="position:absolute;left:1px;top:1050.9px;width:207px;height:1px;background:#e3e3e3"></div>
<div class="t" style="left:4.5px;top:1035.8px;font-size:12.2px;color:#1c1c1c;font-weight:400;letter-spacing:-0.4px">221,39</div>
<div class="t" style="left:57.5px;top:1035.8px;font-size:12.2px;color:#1c1c1c;font-weight:400;letter-spacing:-0.4px">-0,02</div>
<div style="position:absolute;left:1px;top:1072.2px;width:207px;height:1px;background:#e3e3e3"></div>
<div class="t" style="left:4.5px;top:1057.1px;font-size:12.2px;color:#1c1c1c;font-weight:400;letter-spacing:-0.4px">221,91</div>
<div class="t" style="left:57.5px;top:1057.1px;font-size:12.2px;color:#1c1c1c;font-weight:400;letter-spacing:-0.4px">9,63e-03</div>
<div style="position:absolute;left:53.5px;top:156px;width:1px;height:916px;background:#e3e3e3"></div>
<div style="position:absolute;left:208px;top:156px;width:18px;height:916px;background:#f0f0f0"></div>
<svg style="position:absolute;left:208px;top:158px" width="18" height="14"><path d="M5,9 L9,5 L13,9" fill="none" stroke="#333" stroke-width="1.5"/></svg>
<div style="position:absolute;left:209.5px;top:174px;width:14.5px;height:19px;background:#cdcdcd"></div>
<svg style="position:absolute;left:208px;top:1056px" width="18" height="14"><path d="M5,5 L9,9 L13,5" fill="none" stroke="#333" stroke-width="1.5"/></svg>
<div style="position:absolute;left:0px;top:1073px;width:229px;height:1px;background:#c8c8c8"></div>
<div style="position:absolute;left:96px;top:1076px;width:133px;height:1px;background:#d4d4d4"></div>
<div style="position:absolute;left:0px;top:1075px;width:96px;height:22px;background:#fdfdfd;box-shadow:0 1px 0 #dedede, 1px 0 0 #e2e2e2"></div>
<div class="t" style="left:12.0px;top:1082.4px;font-size:11.3px;color:#1c1c1c;font-weight:400;">Measurement</div>
<div class="t" style="left:107.0px;top:1080.9px;font-size:11.3px;color:#1c1c1c;font-weight:400;">Status</div>
<div style="position:absolute;left:234px;top:108px;width:1342px;height:1px;background:#c6c6c6"></div>
<div style="position:absolute;left:234px;top:83.5px;width:1342px;height:1px;background:#cacaca"></div>
<div style="position:absolute;left:0;top:0;width:1576px;height:110px;overflow:hidden">
<div style="position:absolute;left:237px;top:86px;width:1px;height:22px;background:#dcdcdc"></div>
<div class="t" style="left:246.2px;top:93.6px;font-size:11.5px;color:#1c1c1c;font-weight:400;">All</div>
<div style="position:absolute;left:262.5px;top:91px;width:14.5px;height:14.5px;box-sizing:border-box;border-radius:2.5px;background:#d2d2d2;border:1.3px solid #b9b9b9"></div>
<svg style="position:absolute;left:262.5px;top:91px" width="15" height="15"><path d="M4.5,4.5 L10,10 M10,4.5 L4.5,10" stroke="#fff" stroke-width="1.8"/></svg>
<div style="position:absolute;left:290.5px;top:86px;width:1px;height:22px;background:#dcdcdc"></div>
<div style="position:absolute;left:305.0px;top:89.5px;width:16px;height:16px;background:#0b6b3c"></div>
<div class="t" style="left:324.5px;top:93.6px;font-size:11.7px;color:#1c1c1c;font-weight:400;">30W-001-</div>
<div style="position:absolute;left:382.0px;top:91.0px;width:14.5px;height:14.5px;box-sizing:border-box;border-radius:2.5px;background:#d2d2d2;border:1.3px solid #b9b9b9"></div>
<svg style="position:absolute;left:382.0px;top:91.0px" width="15" height="15"><path d="M4.5,4.5 L10,10 M10,4.5 L4.5,10" stroke="#fff" stroke-width="1.8"/></svg>
<div style="position:absolute;left:410.0px;top:86px;width:1px;height:22px;background:#dcdcdc"></div>
<div style="position:absolute;left:424.5px;top:89.5px;width:16px;height:16px;background:#6a6a7e"></div>
<div class="t" style="left:444.0px;top:93.6px;font-size:11.7px;color:#1c1c1c;font-weight:400;">30W-002-</div>
<div style="position:absolute;left:501.5px;top:91.0px;width:14.5px;height:14.5px;box-sizing:border-box;border-radius:2.5px;background:#d2d2d2;border:1.3px solid #b9b9b9"></div>
<svg style="position:absolute;left:501.5px;top:91.0px" width="15" height="15"><path d="M4.5,4.5 L10,10 M10,4.5 L4.5,10" stroke="#fff" stroke-width="1.8"/></svg>
<div style="position:absolute;left:529.5px;top:86px;width:1px;height:22px;background:#dcdcdc"></div>
<div style="position:absolute;left:544.0px;top:89.5px;width:16px;height:16px;background:#5aab55"></div>
<div class="t" style="left:563.5px;top:93.6px;font-size:11.7px;color:#1c1c1c;font-weight:400;">30W-003-</div>
<div style="position:absolute;left:621.0px;top:91.0px;width:14.5px;height:14.5px;box-sizing:border-box;border-radius:2.5px;background:#d2d2d2;border:1.3px solid #b9b9b9"></div>
<svg style="position:absolute;left:621.0px;top:91.0px" width="15" height="15"><path d="M4.5,4.5 L10,10 M10,4.5 L4.5,10" stroke="#fff" stroke-width="1.8"/></svg>
<div style="position:absolute;left:647.4px;top:84px;width:124px;height:25px;background:#ffffff"></div>
<div style="position:absolute;left:663.4px;top:88.0px;width:16px;height:16px;background:#b05a42"></div>
<div class="t" style="left:682.9px;top:92.1px;font-size:11.7px;color:#1c1c1c;font-weight:400;">30W-004-</div>
<div style="position:absolute;left:740.4px;top:89.0px;width:15px;height:15px;box-sizing:border-box;border-radius:2.5px;background:#e5704f;border:1.3px solid #c85a3e"></div>
<svg style="position:absolute;left:740.4px;top:89.5px" width="15" height="15"><path d="M4.5,4.5 L10,10 M10,4.5 L4.5,10" stroke="#fff" stroke-width="1.8"/></svg>
<div style="position:absolute;left:782.9px;top:89.5px;width:16px;height:16px;background:#f9a85f"></div>
<div class="t" style="left:802.4px;top:93.6px;font-size:11.7px;color:#1c1c1c;font-weight:400;">30W-005-</div>
<div style="position:absolute;left:859.9px;top:91.0px;width:14.5px;height:14.5px;box-sizing:border-box;border-radius:2.5px;background:#d2d2d2;border:1.3px solid #b9b9b9"></div>
<svg style="position:absolute;left:859.9px;top:91.0px" width="15" height="15"><path d="M4.5,4.5 L10,10 M10,4.5 L4.5,10" stroke="#fff" stroke-width="1.8"/></svg>
<div style="position:absolute;left:887.9px;top:86px;width:1px;height:22px;background:#dcdcdc"></div>
<div style="position:absolute;left:902.4px;top:89.5px;width:16px;height:16px;background:#0d92ee"></div>
<div class="t" style="left:921.9px;top:93.6px;font-size:11.7px;color:#1c1c1c;font-weight:400;">30W-006-</div>
<div style="position:absolute;left:979.4px;top:91.0px;width:14.5px;height:14.5px;box-sizing:border-box;border-radius:2.5px;background:#d2d2d2;border:1.3px solid #b9b9b9"></div>
<svg style="position:absolute;left:979.4px;top:91.0px" width="15" height="15"><path d="M4.5,4.5 L10,10 M10,4.5 L4.5,10" stroke="#fff" stroke-width="1.8"/></svg>
<div style="position:absolute;left:1007.4px;top:86px;width:1px;height:22px;background:#dcdcdc"></div>
<div style="position:absolute;left:1021.9px;top:89.5px;width:16px;height:16px;background:#e257be"></div>
<div class="t" style="left:1041.4px;top:93.6px;font-size:11.7px;color:#1c1c1c;font-weight:400;">30W-007-</div>
<div style="position:absolute;left:1098.9px;top:91.0px;width:14.5px;height:14.5px;box-sizing:border-box;border-radius:2.5px;background:#d2d2d2;border:1.3px solid #b9b9b9"></div>
<svg style="position:absolute;left:1098.9px;top:91.0px" width="15" height="15"><path d="M4.5,4.5 L10,10 M10,4.5 L4.5,10" stroke="#fff" stroke-width="1.8"/></svg>
<div style="position:absolute;left:1126.9px;top:86px;width:1px;height:22px;background:#dcdcdc"></div>
<div style="position:absolute;left:1141.4px;top:89.5px;width:16px;height:16px;background:#000000"></div>
<div class="t" style="left:1160.9px;top:93.6px;font-size:11.7px;color:#1c1c1c;font-weight:400;">30W-008-</div>
<div style="position:absolute;left:1218.4px;top:91.0px;width:14.5px;height:14.5px;box-sizing:border-box;border-radius:2.5px;background:#d2d2d2;border:1.3px solid #b9b9b9"></div>
<svg style="position:absolute;left:1218.4px;top:91.0px" width="15" height="15"><path d="M4.5,4.5 L10,10 M10,4.5 L4.5,10" stroke="#fff" stroke-width="1.8"/></svg>
<div style="position:absolute;left:1246.3px;top:86px;width:1px;height:22px;background:#dcdcdc"></div>
<div style="position:absolute;left:1260.8px;top:89.5px;width:16px;height:16px;background:#00ee00"></div>
<div class="t" style="left:1280.3px;top:93.6px;font-size:11.7px;color:#1c1c1c;font-weight:400;">30W-009-</div>
<div style="position:absolute;left:1337.8px;top:91.0px;width:14.5px;height:14.5px;box-sizing:border-box;border-radius:2.5px;background:#d2d2d2;border:1.3px solid #b9b9b9"></div>
<svg style="position:absolute;left:1337.8px;top:91.0px" width="15" height="15"><path d="M4.5,4.5 L10,10 M10,4.5 L4.5,10" stroke="#fff" stroke-width="1.8"/></svg>
<div style="position:absolute;left:1365.8px;top:86px;width:1px;height:22px;background:#dcdcdc"></div>
<div style="position:absolute;left:1380.3px;top:89.5px;width:16px;height:16px;background:#0000ee"></div>
<div class="t" style="left:1399.8px;top:93.6px;font-size:11.7px;color:#1c1c1c;font-weight:400;">30W-010-</div>
<div style="position:absolute;left:1457.3px;top:91.0px;width:14.5px;height:14.5px;box-sizing:border-box;border-radius:2.5px;background:#d2d2d2;border:1.3px solid #b9b9b9"></div>
<svg style="position:absolute;left:1457.3px;top:91.0px" width="15" height="15"><path d="M4.5,4.5 L10,10 M10,4.5 L4.5,10" stroke="#fff" stroke-width="1.8"/></svg>
<div style="position:absolute;left:1485.3px;top:86px;width:1px;height:22px;background:#dcdcdc"></div>
<div style="position:absolute;left:1499.8px;top:89.5px;width:16px;height:16px;background:#ee0000"></div>
<div class="t" style="left:1519.3px;top:93.6px;font-size:11.7px;color:#1c1c1c;font-weight:400;">30W-011-</div>
<div style="position:absolute;left:1576.8px;top:91.0px;width:14.5px;height:14.5px;box-sizing:border-box;border-radius:2.5px;background:#d2d2d2;border:1.3px solid #b9b9b9"></div>
<svg style="position:absolute;left:1576.8px;top:91.0px" width="15" height="15"><path d="M4.5,4.5 L10,10 M10,4.5 L4.5,10" stroke="#fff" stroke-width="1.8"/></svg>
</div>
<div style="position:absolute;left:1557px;top:85px;width:19px;height:23px;background:linear-gradient(90deg,rgba(225,236,246,0) 0%,rgba(222,234,246,0.85) 40%,rgba(214,228,242,0.9) 100%)"></div>
<div style="position:absolute;left:1576px;top:84px;width:4px;height:25px;background:#f0f0f0"></div>
<svg style="position:absolute;left:1544px;top:88px" width="32" height="18"><path d="M9,3 L3,9 L9,15 Z" fill="#b0b0b0"/><path d="M19.5,2.5 L26.5,9 L19.5,15.5 Z" fill="#111"/></svg>
<svg style="position:absolute;left:236px;top:113px" width="12" height="14"><path d="M8,3 L4,7 L8,11" fill="none" stroke="#333" stroke-width="1.6"/></svg>
<svg style="position:absolute;left:1561px;top:113px" width="12" height="14"><path d="M4,3 L8,7 L4,11" fill="none" stroke="#333" stroke-width="1.6"/></svg>
<div style="position:absolute;left:625.5px;top:112px;width:92.8px;height:16px;background:#cdcdcd"></div>
<div style="position:absolute;left:234px;top:129px;width:1341px;height:969px;box-sizing:border-box;border:1px solid #7e7e7e;border-right-color:#a0a0a0;border-bottom-color:#8a8a8a;background:#fff"></div>
<div style="position:absolute;left:239px;top:134px;width:77px;height:958px;background:#efeef2"></div>
<div style="position:absolute;left:1494px;top:134px;width:77px;height:958px;background:#efeef2"></div>
<svg style="position:absolute;left:0;top:0" width="2048" height="1126"><rect x="287.5" y="160.5" width="1235" height="905" fill="none" stroke="#cfcfcf" stroke-width="1" stroke-dasharray="3,3"/><line x1="316.5" y1="161" x2="316.5" y2="1065" stroke="#cfcfcf" stroke-width="1" stroke-dasharray="3,3"/><line x1="454.5" y1="161" x2="454.5" y2="1065" stroke="#cfcfcf" stroke-width="1" stroke-dasharray="3,3"/><line x1="593.5" y1="161" x2="593.5" y2="1065" stroke="#cfcfcf" stroke-width="1" stroke-dasharray="3,3"/><line x1="731.5" y1="161" x2="731.5" y2="1065" stroke="#cfcfcf" stroke-width="1" stroke-dasharray="3,3"/><line x1="870.5" y1="161" x2="870.5" y2="1065" stroke="#cfcfcf" stroke-width="1" stroke-dasharray="3,3"/><line x1="1008.5" y1="161" x2="1008.5" y2="1065" stroke="#cfcfcf" stroke-width="1" stroke-dasharray="3,3"/><line x1="1147.5" y1="161" x2="1147.5" y2="1065" stroke="#cfcfcf" stroke-width="1" stroke-dasharray="3,3"/><line x1="1285.5" y1="161" x2="1285.5" y2="1065" stroke="#cfcfcf" stroke-width="1" stroke-dasharray="3,3"/><line x1="1424.5" y1="161" x2="1424.5" y2="1065" stroke="#cfcfcf" stroke-width="1" stroke-dasharray="3,3"/><line x1="288" y1="1060.5" x2="1522" y2="1060.5" stroke="#cfcfcf" stroke-width="1" stroke-dasharray="3,3"/><line x1="288" y1="905.5" x2="1522" y2="905.5" stroke="#cfcfcf" stroke-width="1" stroke-dasharray="3,3"/><line x1="288" y1="750.5" x2="1522" y2="750.5" stroke="#cfcfcf" stroke-width="1" stroke-dasharray="3,3"/><line x1="288" y1="595.5" x2="1522" y2="595.5" stroke="#cfcfcf" stroke-width="1" stroke-dasharray="3,3"/><line x1="288" y1="440.5" x2="1522" y2="440.5" stroke="#cfcfcf" stroke-width="1" stroke-dasharray="3,3"/><line x1="288" y1="285.5" x2="1522" y2="285.5" stroke="#cfcfcf" stroke-width="1" stroke-dasharray="3,3"/></svg>
<svg style="position:absolute;left:0;top:0" width="2048" height="1126" viewBox="0 0 2048 1126">
<defs><linearGradient id="rb" gradientUnits="userSpaceOnUse" x1="316.5" y1="0" x2="1493.75" y2="0"><stop offset="0.1882" stop-color="rgb(0,0,0)"/><stop offset="0.1941" stop-color="rgb(0,0,0)"/><stop offset="0.2000" stop-color="rgb(0,0,0)"/><stop offset="0.2059" stop-color="rgb(0,0,0)"/><stop offset="0.2118" stop-color="rgb(97,0,97)"/><stop offset="0.2176" stop-color="rgb(111,0,119)"/><stop offset="0.2235" stop-color="rgb(121,0,141)"/><stop offset="0.2294" stop-color="rgb(128,0,161)"/><stop offset="0.2353" stop-color="rgb(131,0,181)"/><stop offset="0.2412" stop-color="rgb(130,0,200)"/><stop offset="0.2471" stop-color="rgb(126,0,219)"/><stop offset="0.2529" stop-color="rgb(118,0,237)"/><stop offset="0.2588" stop-color="rgb(106,0,255)"/><stop offset="0.2647" stop-color="rgb(84,0,255)"/><stop offset="0.2706" stop-color="rgb(61,0,255)"/><stop offset="0.2765" stop-color="rgb(35,0,255)"/><stop offset="0.2824" stop-color="rgb(0,0,255)"/><stop offset="0.2882" stop-color="rgb(0,40,255)"/><stop offset="0.2941" stop-color="rgb(0,70,255)"/><stop offset="0.3000" stop-color="rgb(0,97,255)"/><stop offset="0.3059" stop-color="rgb(0,123,255)"/><stop offset="0.3118" stop-color="rgb(0,146,255)"/><stop offset="0.3176" stop-color="rgb(0,169,255)"/><stop offset="0.3235" stop-color="rgb(0,192,255)"/><stop offset="0.3294" stop-color="rgb(0,213,255)"/><stop offset="0.3353" stop-color="rgb(0,234,255)"/><stop offset="0.3412" stop-color="rgb(0,255,255)"/><stop offset="0.3471" stop-color="rgb(0,255,203)"/><stop offset="0.3529" stop-color="rgb(0,255,146)"/><stop offset="0.3588" stop-color="rgb(0,255,84)"/><stop offset="0.3647" stop-color="rgb(0,255,0)"/><stop offset="0.3706" stop-color="rgb(31,255,0)"/><stop offset="0.3765" stop-color="rgb(54,255,0)"/><stop offset="0.3824" stop-color="rgb(74,255,0)"/><stop offset="0.3882" stop-color="rgb(94,255,0)"/><stop offset="0.3941" stop-color="rgb(112,255,0)"/><stop offset="0.4000" stop-color="rgb(129,255,0)"/><stop offset="0.4059" stop-color="rgb(146,255,0)"/><stop offset="0.4118" stop-color="rgb(163,255,0)"/><stop offset="0.4176" stop-color="rgb(179,255,0)"/><stop offset="0.4235" stop-color="rgb(195,255,0)"/><stop offset="0.4294" stop-color="rgb(210,255,0)"/><stop offset="0.4353" stop-color="rgb(225,255,0)"/><stop offset="0.4412" stop-color="rgb(240,255,0)"/><stop offset="0.4471" stop-color="rgb(255,255,0)"/><stop offset="0.4529" stop-color="rgb(255,239,0)"/><stop offset="0.4588" stop-color="rgb(255,223,0)"/><stop offset="0.4647" stop-color="rgb(255,207,0)"/><stop offset="0.4706" stop-color="rgb(255,190,0)"/><stop offset="0.4765" stop-color="rgb(255,173,0)"/><stop offset="0.4824" stop-color="rgb(255,155,0)"/><stop offset="0.4882" stop-color="rgb(255,137,0)"/><stop offset="0.4941" stop-color="rgb(255,119,0)"/><stop offset="0.5000" stop-color="rgb(255,99,0)"/><stop offset="0.5059" stop-color="rgb(255,79,0)"/><stop offset="0.5118" stop-color="rgb(255,57,0)"/><stop offset="0.5176" stop-color="rgb(255,33,0)"/><stop offset="0.5235" stop-color="rgb(255,0,0)"/><stop offset="0.5294" stop-color="rgb(255,0,0)"/><stop offset="0.5353" stop-color="rgb(255,0,0)"/><stop offset="0.5412" stop-color="rgb(255,0,0)"/><stop offset="0.5471" stop-color="rgb(255,0,0)"/><stop offset="0.5529" stop-color="rgb(255,0,0)"/><stop offset="0.5588" stop-color="rgb(255,0,0)"/><stop offset="0.5647" stop-color="rgb(255,0,0)"/><stop offset="0.5706" stop-color="rgb(255,0,0)"/><stop offset="0.5765" stop-color="rgb(255,0,0)"/><stop offset="0.5824" stop-color="rgb(255,0,0)"/><stop offset="0.5882" stop-color="rgb(255,0,0)"/><stop offset="0.5941" stop-color="rgb(246,0,0)"/><stop offset="0.6000" stop-color="rgb(237,0,0)"/><stop offset="0.6059" stop-color="rgb(228,0,0)"/><stop offset="0.6118" stop-color="rgb(219,0,0)"/><stop offset="0.6176" stop-color="rgb(209,0,0)"/><stop offset="0.6235" stop-color="rgb(200,0,0)"/><stop offset="0.6294" stop-color="rgb(190,0,0)"/><stop offset="0.6353" stop-color="rgb(181,0,0)"/><stop offset="0.6412" stop-color="rgb(171,0,0)"/><stop offset="0.6471" stop-color="rgb(161,0,0)"/><stop offset="0.6529" stop-color="rgb(151,0,0)"/><stop offset="0.6588" stop-color="rgb(141,0,0)"/><stop offset="0.6647" stop-color="rgb(130,0,0)"/><stop offset="0.6706" stop-color="rgb(119,0,0)"/><stop offset="0.6765" stop-color="rgb(109,0,0)"/><stop offset="0.6824" stop-color="rgb(97,0,0)"/><stop offset="0.6882" stop-color="rgb(97,0,0)"/><stop offset="0.6941" stop-color="rgb(97,0,0)"/><stop offset="0.7000" stop-color="rgb(97,0,0)"/></linearGradient></defs>
<path d="M316.50,1060.00L316.50,1060.12L317.19,1059.76L317.88,1060.10L318.58,1060.14L319.27,1060.43L319.96,1060.10L320.65,1059.48L321.35,1059.80L322.04,1059.52L322.73,1059.88L323.43,1059.81L324.12,1059.91L324.81,1060.77L325.50,1059.60L326.19,1059.76L326.89,1059.77L327.58,1060.78L328.27,1060.81L328.96,1060.41L329.66,1060.21L330.35,1059.85L331.04,1060.02L331.74,1059.75L332.43,1060.30L333.12,1059.85L333.81,1059.81L334.50,1060.30L335.20,1059.20L335.89,1059.74L336.58,1059.44L337.27,1060.28L337.97,1060.34L338.66,1060.16L339.35,1060.04L340.05,1059.70L340.74,1059.88L341.43,1060.20L342.12,1060.44L342.81,1060.24L343.51,1059.43L344.20,1060.37L344.89,1059.88L345.58,1059.80L346.28,1060.69L346.97,1059.97L347.66,1059.39L348.36,1060.93L349.05,1060.14L349.74,1060.04L350.43,1060.37L351.12,1059.76L351.82,1060.02L352.51,1060.67L353.20,1059.61L353.89,1059.68L354.59,1059.55L355.28,1059.32L355.97,1059.82L356.67,1059.93L357.36,1060.59L358.05,1059.70L358.74,1060.27L359.44,1060.20L360.13,1060.58L360.82,1060.44L361.51,1060.24L362.20,1059.39L362.90,1060.93L363.59,1060.67L364.28,1059.88L364.98,1059.32L365.67,1059.72L366.36,1060.87L367.05,1061.16L367.75,1059.82L368.44,1060.33L369.13,1060.51L369.82,1059.53L370.51,1059.47L371.21,1059.91L371.90,1059.87L372.59,1059.78L373.29,1059.24L373.98,1059.70L374.67,1059.74L375.36,1059.73L376.06,1060.71L376.75,1059.39L377.44,1059.54L378.13,1059.74L378.82,1060.90L379.52,1060.28L380.21,1059.59L380.90,1060.82L381.60,1060.07L382.29,1059.51L382.98,1060.59L383.67,1059.23L384.37,1059.72L385.06,1060.05L385.75,1059.83L386.44,1059.68L387.13,1059.92L387.83,1059.44L388.52,1060.28L389.21,1060.17L389.90,1059.49L390.60,1059.96L391.29,1060.38L391.98,1059.53L392.68,1059.29L393.37,1060.18L394.06,1060.61L394.75,1060.04L395.44,1060.04L396.14,1060.11L396.83,1059.32L397.52,1060.45L398.22,1059.38L398.91,1060.56L399.60,1060.34L400.29,1059.68L400.99,1059.44L401.68,1059.57L402.37,1059.81L403.06,1059.90L403.75,1059.90L404.45,1059.70L405.14,1060.05L405.83,1059.84L406.52,1059.70L407.22,1059.96L407.91,1059.61L408.60,1059.70L409.30,1059.03L409.99,1059.81L410.68,1060.16L411.37,1060.13L412.06,1059.97L412.76,1059.53L413.45,1060.12L414.14,1059.78L414.83,1059.10L415.53,1061.15L416.22,1060.48L416.91,1059.84L417.61,1059.77L418.30,1059.84L418.99,1060.16L419.68,1059.65L420.38,1059.82L421.07,1060.20L421.76,1058.82L422.45,1059.79L423.14,1060.21L423.84,1060.00L424.53,1060.05L425.22,1059.98L425.92,1061.22L426.61,1060.17L427.30,1059.48L427.99,1060.49L428.69,1059.98L429.38,1059.50L430.07,1059.55L430.76,1059.25L431.45,1060.73L432.15,1060.11L432.84,1060.10L433.53,1059.65L434.23,1059.43L434.92,1061.19L435.61,1059.43L436.30,1060.61L437.00,1059.62L437.69,1060.63L438.38,1059.85L439.07,1059.38L439.76,1060.00L440.46,1059.84L441.15,1059.56L441.84,1059.87L442.53,1059.97L443.23,1059.22L443.92,1059.44L444.61,1060.07L445.31,1058.65L446.00,1060.46L446.69,1059.50L447.38,1060.05L448.07,1059.86L448.77,1059.60L449.46,1059.82L450.15,1059.63L450.85,1060.63L451.54,1060.62L452.23,1059.63L452.92,1060.37L453.62,1060.40L454.31,1060.60L455.00,1059.33L455.69,1059.57L456.38,1059.23L457.08,1060.35L457.77,1059.91L458.46,1060.44L459.15,1059.56L459.85,1059.17L460.54,1060.32L461.23,1059.18L461.93,1059.45L462.62,1059.99L463.31,1060.82L464.00,1059.25L464.69,1059.95L465.39,1060.18L466.08,1059.72L466.77,1059.71L467.47,1059.20L468.16,1060.37L468.85,1059.37L469.54,1059.21L470.24,1059.22L470.93,1059.98L471.62,1060.24L472.31,1059.42L473.00,1059.84L473.70,1059.83L474.39,1059.23L475.08,1060.01L475.77,1060.96L476.47,1060.07L477.16,1060.75L477.85,1059.50L478.54,1059.74L479.24,1060.17L479.93,1059.89L480.62,1059.49L481.31,1059.84L482.01,1059.26L482.70,1059.91L483.39,1059.39L484.09,1059.18L484.78,1059.13L485.47,1060.18L486.16,1059.46L486.86,1060.74L487.55,1060.37L488.24,1060.78L488.93,1059.37L489.62,1060.44L490.32,1059.87L491.01,1059.95L491.70,1059.88L492.39,1060.14L493.09,1059.75L493.78,1059.03L494.47,1059.84L495.16,1059.61L495.86,1059.39L496.55,1059.95L497.24,1060.44L497.94,1060.11L498.63,1059.35L499.32,1060.61L500.01,1060.12L500.71,1059.38L501.40,1059.48L502.09,1059.84L502.78,1059.47L503.48,1059.76L504.17,1060.39L504.86,1060.56L505.55,1060.13L506.25,1059.41L506.94,1060.10L507.63,1060.25L508.32,1060.19L509.01,1060.54L509.71,1059.88L510.40,1060.38L511.09,1059.66L511.78,1060.92L512.48,1059.67L513.17,1060.12L513.86,1060.72L514.56,1059.48L515.25,1059.94L515.94,1060.85L516.63,1060.22L517.33,1059.68L518.02,1060.02L518.71,1059.45L519.40,1059.46L520.10,1059.50L520.79,1059.65L521.48,1059.18L522.17,1059.50L522.87,1059.59L523.56,1060.77L524.25,1059.38L524.94,1059.19L525.63,1059.93L526.33,1060.01L527.02,1058.89L527.71,1060.61L528.40,1059.57L529.10,1058.66L529.79,1060.22L530.48,1059.46L531.17,1058.90L531.87,1059.84L532.56,1059.52L533.25,1059.36L533.94,1060.20L534.64,1059.81L535.33,1059.64L536.02,1059.39L536.72,1059.78L537.41,1059.86L538.10,1060.24L538.79,1059.93L539.49,1059.35L540.18,1059.71L540.87,1060.15L541.56,1060.15L542.25,1058.51L542.95,1059.22L543.64,1059.45L544.33,1060.95L545.02,1059.46L545.72,1059.52L546.41,1058.96L547.10,1059.54L547.79,1059.77L548.49,1059.50L549.18,1060.64L549.87,1059.25L550.57,1059.58L551.26,1060.06L551.95,1059.11L552.64,1058.89L553.34,1060.38L554.03,1060.03L554.72,1059.59L555.41,1059.63L556.11,1059.90L556.80,1060.17L557.49,1058.73L558.18,1059.23L558.88,1060.27L559.57,1060.33L560.26,1058.91L560.95,1059.24L561.64,1058.86L562.34,1059.32L563.03,1060.10L563.72,1059.57L564.41,1060.70L565.11,1060.04L565.80,1059.72L566.49,1059.44L567.18,1060.02L567.88,1059.74L568.57,1059.46L569.26,1059.49L569.96,1059.36L570.65,1059.55L571.34,1059.79L572.03,1059.26L572.73,1059.59L573.42,1059.99L574.11,1059.88L574.80,1059.57L575.50,1059.60L576.19,1059.46L576.88,1059.51L577.57,1059.41L578.26,1059.53L578.96,1060.03L579.65,1059.22L580.34,1058.89L581.04,1059.15L581.73,1059.41L582.42,1059.08L583.11,1059.70L583.81,1060.09L584.50,1059.14L585.19,1059.56L585.88,1058.74L586.58,1059.54L587.27,1060.21L587.96,1059.42L588.65,1058.15L589.35,1059.01L590.04,1059.41L590.73,1059.07L591.42,1058.41L592.12,1058.35L592.81,1058.43L593.50,1057.71L594.19,1057.91L594.88,1058.00L595.58,1057.38L596.27,1056.48L596.96,1056.35L597.65,1055.85L598.35,1056.34L599.04,1055.43L599.73,1054.55L600.42,1054.56L601.12,1053.44L601.81,1053.15L602.50,1052.45L603.19,1052.35L603.89,1050.38L604.58,1050.19L605.27,1049.95L605.96,1048.73L606.66,1046.31L607.35,1046.27L608.04,1044.13L608.74,1042.37L609.43,1040.96L610.12,1039.53L610.81,1036.79L611.50,1034.49L612.20,1031.82L612.89,1029.57L613.58,1027.44L614.27,1024.49L614.97,1021.98L615.66,1019.34L616.35,1016.41L617.05,1013.32L617.74,1009.41L618.43,1006.51L619.12,1002.38L619.82,997.93L620.51,994.27L621.20,989.25L621.89,985.28L622.59,979.77L623.28,974.15L623.97,968.98L624.66,963.95L625.36,958.52L626.05,953.29L626.74,945.56L627.43,939.55L628.12,932.08L628.82,925.15L629.51,916.00L630.20,906.70L630.89,893.89L631.59,880.98L632.28,868.76L632.97,854.11L633.66,840.48L634.36,829.22L635.05,817.82L635.74,806.80L636.43,796.37L637.13,786.57L637.82,775.30L638.51,763.90L639.20,751.38L639.90,737.84L640.59,722.78L641.28,707.22L641.98,691.75L642.67,673.67L643.36,655.40L644.05,636.02L644.75,615.17L645.44,593.48L646.13,569.75L646.82,545.40L647.51,518.49L648.21,491.03L648.90,465.43L649.59,441.61L650.29,419.33L650.98,398.82L651.67,378.04L652.36,359.05L653.06,340.98L653.75,323.88L654.44,307.09L655.13,292.72L655.83,276.27L656.52,260.15L657.21,245.41L657.90,229.25L658.60,215.15L659.29,203.68L659.98,193.21L660.67,186.61L661.37,183.27L662.06,184.31L662.75,189.69L663.44,198.65L664.13,209.70L664.83,223.53L665.52,238.84L666.21,256.37L666.90,275.98L667.60,298.44L668.29,324.52L668.98,355.58L669.67,388.51L670.37,419.73L671.06,449.11L671.75,475.50L672.44,500.29L673.14,524.62L673.83,546.04L674.52,569.42L675.21,589.97L675.91,611.28L676.60,631.24L677.29,653.14L677.99,671.83L678.68,690.00L679.37,707.38L680.06,722.67L680.75,738.27L681.45,750.82L682.14,762.81L682.83,773.50L683.52,783.74L684.22,793.49L684.91,802.05L685.60,811.29L686.30,818.27L686.99,827.19L687.68,834.22L688.37,840.87L689.07,849.57L689.76,857.05L690.45,864.15L691.14,872.38L691.84,880.38L692.53,887.27L693.22,894.21L693.91,900.84L694.61,907.74L695.30,912.18L695.99,917.41L696.68,923.05L697.38,927.49L698.07,932.15L698.76,935.37L699.45,940.29L700.14,943.35L700.84,947.47L701.53,951.00L702.22,953.68L702.91,956.68L703.61,960.53L704.30,963.81L704.99,965.64L705.68,968.07L706.38,969.40L707.07,969.99L707.76,971.16L708.45,972.84L709.15,972.30L709.84,974.09L710.53,974.32L711.23,975.49L711.92,975.57L712.61,976.62L713.30,975.03L714.00,975.19L714.69,976.23L715.38,976.04L716.07,975.65L716.76,973.75L717.46,973.86L718.15,972.90L718.84,972.17L719.54,971.15L720.23,970.57L720.92,968.78L721.61,967.85L722.31,965.13L723.00,962.50L723.69,959.72L724.38,957.20L725.08,954.54L725.77,950.89L726.46,947.85L727.15,943.33L727.85,940.02L728.54,936.64L729.23,932.92L729.92,929.11L730.62,925.29L731.31,921.13L732.00,917.01L732.69,913.17L733.38,909.48L734.08,905.11L734.77,902.84L735.46,898.88L736.15,893.92L736.85,892.58L737.54,888.33L738.23,884.41L738.92,880.84L739.62,877.16L740.31,873.92L741.00,870.08L741.69,866.71L742.39,862.84L743.08,860.63L743.77,856.64L744.46,852.71L745.16,849.74L745.85,846.27L746.54,842.00L747.24,839.19L747.93,835.14L748.62,831.69L749.31,828.54L750.00,825.08L750.70,822.02L751.39,819.29L752.08,815.22L752.77,811.61L753.47,808.74L754.16,805.21L754.85,801.52L755.55,799.14L756.24,795.29L756.93,791.68L757.62,789.99L758.32,786.83L759.01,784.20L759.70,780.59L760.39,778.45L761.09,775.41L761.78,773.49L762.47,770.48L763.16,767.86L763.86,766.20L764.55,762.13L765.24,760.04L765.93,759.11L766.62,755.74L767.32,754.20L768.01,752.08L768.70,750.46L769.39,749.91L770.09,747.91L770.78,745.80L771.47,745.64L772.16,744.70L772.86,743.72L773.55,742.53L774.24,740.65L774.93,738.89L775.63,738.49L776.32,737.57L777.01,735.58L777.70,736.01L778.40,735.17L779.09,733.68L779.78,732.82L780.48,732.79L781.17,732.09L781.86,730.61L782.55,729.93L783.25,730.06L783.94,728.88L784.63,728.48L785.32,727.45L786.01,727.26L786.71,726.80L787.40,726.55L788.09,725.50L788.79,725.04L789.48,725.69L790.17,724.87L790.86,725.50L791.56,724.91L792.25,724.40L792.94,723.86L793.63,724.67L794.33,724.38L795.02,724.11L795.71,724.85L796.40,723.98L797.10,724.24L797.79,723.63L798.48,724.33L799.17,724.71L799.87,723.66L800.56,723.53L801.25,723.95L801.94,723.25L802.63,723.89L803.33,724.14L804.02,723.68L804.71,724.83L805.40,724.52L806.10,724.34L806.79,724.07L807.48,724.77L808.17,724.74L808.87,725.44L809.56,725.20L810.25,724.76L810.94,726.20L811.64,724.94L812.33,726.74L813.02,726.71L813.71,726.93L814.41,726.82L815.10,728.29L815.79,729.05L816.49,728.03L817.18,728.28L817.87,728.71L818.56,728.06L819.25,729.64L819.95,729.98L820.64,730.00L821.33,730.65L822.02,730.36L822.72,732.19L823.41,732.12L824.10,734.04L824.80,732.25L825.49,733.22L826.18,732.93L826.87,732.70L827.57,734.18L828.26,734.72L828.95,735.26L829.64,735.87L830.34,736.22L831.03,736.04L831.72,736.82L832.41,737.29L833.11,737.91L833.80,737.88L834.49,738.61L835.18,739.47L835.88,739.61L836.57,740.58L837.26,741.66L837.95,740.93L838.64,742.02L839.34,743.34L840.03,742.92L840.72,743.92L841.41,745.51L842.11,744.56L842.80,745.85L843.49,746.23L844.19,747.25L844.88,748.11L845.57,749.50L846.26,748.93L846.96,750.11L847.65,750.98L848.34,751.38L849.03,752.26L849.73,752.72L850.42,754.03L851.11,754.66L851.80,756.54L852.50,756.52L853.19,756.83L853.88,757.39L854.57,759.14L855.26,759.94L855.96,760.03L856.65,761.94L857.34,762.39L858.03,762.91L858.73,764.74L859.42,765.18L860.11,767.19L860.80,767.79L861.50,769.01L862.19,770.00L862.88,770.60L863.58,771.09L864.27,773.75L864.96,774.85L865.65,775.47L866.35,777.42L867.04,777.83L867.73,778.98L868.42,780.61L869.12,781.43L869.81,783.69L870.50,783.78L871.19,786.18L871.88,787.03L872.58,788.26L873.27,789.51L873.96,790.24L874.65,792.02L875.35,793.67L876.04,794.65L876.73,795.60L877.42,797.88L878.12,799.22L878.81,800.32L879.50,802.37L880.20,804.72L880.89,804.46L881.58,806.22L882.27,809.93L882.97,810.63L883.66,812.07L884.35,813.49L885.04,815.33L885.74,817.51L886.43,819.62L887.12,820.78L887.81,822.06L888.50,824.86L889.20,826.59L889.89,827.85L890.58,830.56L891.27,831.51L891.97,833.37L892.66,834.70L893.35,837.05L894.04,838.91L894.74,840.44L895.43,842.04L896.12,844.11L896.82,845.54L897.51,846.94L898.20,848.50L898.89,850.03L899.59,853.07L900.28,854.73L900.97,857.61L901.66,857.35L902.36,860.54L903.05,862.12L903.74,863.79L904.43,866.65L905.12,867.72L905.82,869.92L906.51,872.77L907.20,873.70L907.89,875.23L908.59,878.69L909.28,879.35L909.97,881.60L910.66,883.42L911.36,885.37L912.05,886.87L912.74,889.52L913.44,890.87L914.13,893.36L914.82,894.65L915.51,897.22L916.21,898.66L916.90,899.53L917.59,901.88L918.28,903.86L918.98,906.00L919.67,907.47L920.36,908.62L921.05,909.87L921.75,911.72L922.44,913.26L923.13,915.12L923.82,916.02L924.51,918.42L925.21,920.05L925.90,920.90L926.59,922.82L927.28,924.51L927.98,926.16L928.67,927.50L929.36,928.56L930.05,930.17L930.75,932.38L931.44,933.05L932.13,934.60L932.83,936.60L933.52,937.16L934.21,939.07L934.90,940.48L935.60,941.32L936.29,942.43L936.98,944.75L937.67,945.54L938.37,947.50L939.06,947.28L939.75,949.92L940.44,950.40L941.13,952.55L941.83,953.11L942.52,953.68L943.21,957.18L943.90,957.39L944.60,958.15L945.29,959.64L945.98,961.11L946.67,960.96L947.37,963.14L948.06,965.14L948.75,965.12L949.45,967.51L950.14,967.30L950.83,969.28L951.52,970.07L952.22,970.68L952.91,972.35L953.60,974.18L954.29,975.43L954.99,975.16L955.68,976.46L956.37,978.27L957.06,978.54L957.75,979.76L958.45,980.73L959.14,983.14L959.83,983.23L960.52,983.66L961.22,984.73L961.91,985.64L962.60,988.18L963.29,987.89L963.99,988.67L964.68,988.62L965.37,991.18L966.07,991.77L966.76,992.47L967.45,992.93L968.14,994.40L968.84,994.47L969.53,996.18L970.22,996.47L970.91,997.60L971.61,998.02L972.30,999.14L972.99,1000.26L973.68,999.68L974.38,1000.72L975.07,1001.78L975.76,1002.06L976.45,1002.33L977.14,1003.89L977.84,1004.11L978.53,1004.43L979.22,1005.06L979.91,1006.09L980.61,1007.56L981.30,1006.62L981.99,1007.69L982.69,1008.48L983.38,1009.26L984.07,1009.65L984.76,1010.63L985.46,1011.56L986.15,1012.07L986.84,1012.66L987.53,1013.31L988.23,1014.22L988.92,1014.02L989.61,1015.58L990.30,1015.30L991.00,1016.73L991.69,1016.72L992.38,1016.87L993.07,1018.05L993.76,1019.12L994.46,1019.37L995.15,1019.93L995.84,1021.42L996.53,1021.49L997.23,1021.72L997.92,1022.60L998.61,1022.92L999.30,1023.18L1000.00,1023.72L1000.69,1024.20L1001.38,1024.89L1002.08,1025.82L1002.77,1026.21L1003.46,1026.83L1004.15,1027.34L1004.85,1027.75L1005.54,1028.94L1006.23,1028.74L1006.92,1029.03L1007.62,1029.89L1008.31,1029.85L1009.00,1029.99L1009.69,1030.70L1010.38,1030.03L1011.08,1032.59L1011.77,1031.83L1012.46,1032.94L1013.15,1031.98L1013.85,1031.54L1014.54,1034.29L1015.23,1033.39L1015.92,1033.54L1016.62,1034.24L1017.31,1034.16L1018.00,1035.78L1018.70,1034.64L1019.39,1035.16L1020.08,1035.62L1020.77,1036.20L1021.47,1035.92L1022.16,1036.73L1022.85,1036.68L1023.54,1037.30L1024.24,1038.38L1024.93,1037.62L1025.62,1037.78L1026.31,1037.78L1027.01,1038.81L1027.70,1038.67L1028.39,1038.63L1029.08,1039.10L1029.78,1038.84L1030.47,1038.74L1031.16,1040.35L1031.85,1041.07L1032.55,1040.02L1033.24,1039.95L1033.93,1040.48L1034.62,1040.78L1035.32,1041.69L1036.01,1041.97L1036.70,1041.47L1037.39,1042.55L1038.09,1043.21L1038.78,1043.06L1039.47,1041.67L1040.16,1042.17L1040.86,1043.61L1041.55,1043.86L1042.24,1043.64L1042.93,1044.33L1043.62,1043.59L1044.32,1044.45L1045.01,1045.14L1045.70,1044.24L1046.39,1045.34L1047.09,1045.17L1047.78,1045.49L1048.47,1045.83L1049.16,1045.74L1049.86,1046.41L1050.55,1047.14L1051.24,1047.50L1051.93,1047.25L1052.63,1047.20L1053.32,1047.04L1054.01,1047.18L1054.70,1047.12L1055.40,1047.49L1056.09,1048.09L1056.78,1048.21L1057.47,1049.03L1058.17,1048.27L1058.86,1048.12L1059.55,1048.24L1060.24,1048.69L1060.94,1048.85L1061.63,1048.47L1062.32,1049.04L1063.01,1048.84L1063.71,1049.04L1064.40,1049.34L1065.09,1048.96L1065.78,1049.96L1066.48,1049.98L1067.17,1050.31L1067.86,1050.42L1068.55,1049.44L1069.25,1049.46L1069.94,1050.38L1070.63,1050.24L1071.33,1050.07L1072.02,1050.35L1072.71,1050.27L1073.40,1051.53L1074.10,1051.34L1074.79,1050.94L1075.48,1050.58L1076.17,1051.31L1076.87,1051.86L1077.56,1051.73L1078.25,1051.97L1078.94,1052.16L1079.63,1051.16L1080.33,1052.26L1081.02,1052.06L1081.71,1051.16L1082.40,1051.72L1083.10,1052.21L1083.79,1052.76L1084.48,1052.38L1085.17,1051.92L1085.87,1052.49L1086.56,1052.29L1087.25,1052.94L1087.95,1052.85L1088.64,1053.29L1089.33,1053.11L1090.02,1052.81L1090.72,1054.19L1091.41,1053.66L1092.10,1053.63L1092.79,1054.11L1093.49,1054.10L1094.18,1053.70L1094.87,1053.24L1095.56,1053.98L1096.26,1054.23L1096.95,1055.21L1097.64,1053.70L1098.33,1054.66L1099.03,1054.81L1099.72,1055.42L1100.41,1055.02L1101.10,1055.60L1101.80,1055.16L1102.49,1055.07L1103.18,1055.36L1103.87,1055.33L1104.57,1055.95L1105.26,1054.97L1105.95,1056.02L1106.64,1056.64L1107.34,1055.96L1108.03,1056.30L1108.72,1056.48L1109.41,1056.24L1110.11,1056.01L1110.80,1056.75L1111.49,1056.32L1112.18,1055.65L1112.88,1056.04L1113.57,1056.48L1114.26,1056.40L1114.95,1056.57L1115.64,1056.58L1116.34,1056.27L1117.03,1056.70L1117.72,1057.82L1118.41,1056.76L1119.11,1057.20L1119.80,1056.53L1120.49,1057.16L1121.18,1056.85L1121.88,1055.95L1122.57,1057.49L1123.26,1057.57L1123.95,1057.74L1124.65,1058.24L1125.34,1058.04L1126.03,1057.03L1126.72,1057.54L1127.42,1058.15L1128.11,1058.00L1128.80,1057.06L1129.49,1057.74L1130.19,1057.59L1130.88,1057.30L1131.57,1056.85L1132.26,1056.61L1132.96,1057.07L1133.65,1057.51L1134.34,1057.53L1135.03,1056.80L1135.73,1057.01L1136.42,1057.85L1137.11,1057.52L1137.80,1057.63L1138.50,1057.76L1139.19,1058.05L1139.88,1058.46L1140.58,1058.12L1141.27,1058.61L1141.96,1057.35L1142.65,1057.69L1143.35,1058.53L1144.04,1057.34L1144.73,1057.60L1145.42,1058.92L1146.12,1057.20L1146.81,1057.70L1147.50,1057.14L1148.19,1058.70L1148.88,1057.90L1149.58,1057.97L1150.27,1058.09L1150.96,1058.13L1151.65,1057.73L1152.35,1058.94L1153.04,1058.84L1153.73,1058.93L1154.42,1058.56L1155.12,1058.60L1155.81,1058.17L1156.50,1058.24L1157.20,1058.37L1157.89,1058.71L1158.58,1058.62L1159.27,1057.99L1159.97,1058.10L1160.66,1058.43L1161.35,1058.64L1162.04,1057.79L1162.74,1058.80L1163.43,1058.24L1164.12,1058.03L1164.81,1058.71L1165.51,1058.22L1166.20,1059.14L1166.89,1058.16L1167.58,1058.56L1168.28,1059.40L1168.97,1058.37L1169.66,1059.11L1170.35,1058.12L1171.05,1059.05L1171.74,1058.82L1172.43,1058.63L1173.12,1058.93L1173.82,1058.67L1174.51,1059.07L1175.20,1058.51L1175.89,1058.84L1176.59,1058.75L1177.28,1060.15L1177.97,1058.34L1178.66,1058.88L1179.36,1059.74L1180.05,1058.88L1180.74,1058.72L1181.43,1058.45L1182.12,1059.46L1182.82,1058.25L1183.51,1059.06L1184.20,1057.88L1184.89,1059.08L1185.59,1058.70L1186.28,1059.20L1186.97,1059.56L1187.66,1058.54L1188.36,1058.64L1189.05,1058.36L1189.74,1058.69L1190.43,1059.36L1191.13,1059.88L1191.82,1059.42L1192.51,1059.44L1193.20,1059.51L1193.90,1058.87L1194.59,1059.00L1195.28,1059.28L1195.97,1059.08L1196.67,1059.24L1197.36,1059.08L1198.05,1058.84L1198.74,1058.75L1199.44,1059.52L1200.13,1059.90L1200.82,1058.55L1201.51,1059.16L1202.21,1058.71L1202.90,1059.99L1203.59,1059.38L1204.28,1059.22L1204.98,1059.91L1205.67,1059.48L1206.36,1058.91L1207.05,1058.75L1207.75,1058.52L1208.44,1059.66L1209.13,1059.92L1209.83,1059.03L1210.52,1058.84L1211.21,1059.19L1211.90,1059.89L1212.60,1058.92L1213.29,1058.92L1213.98,1059.04L1214.67,1059.53L1215.37,1059.16L1216.06,1058.94L1216.75,1059.57L1217.44,1060.17L1218.13,1059.17L1218.83,1059.10L1219.52,1059.32L1220.21,1058.92L1220.90,1059.61L1221.60,1059.38L1222.29,1059.48L1222.98,1059.08L1223.67,1058.61L1224.37,1059.47L1225.06,1058.40L1225.75,1058.65L1226.45,1059.00L1227.14,1059.10L1227.83,1058.55L1228.52,1059.46L1229.22,1059.43L1229.91,1059.88L1230.60,1059.17L1231.29,1058.76L1231.99,1059.15L1232.68,1059.20L1233.37,1059.49L1234.06,1059.32L1234.76,1060.07L1235.45,1058.92L1236.14,1059.60L1236.83,1059.93L1237.53,1059.77L1238.22,1059.81L1238.91,1059.03L1239.60,1058.94L1240.30,1060.06L1240.99,1059.00L1241.68,1059.02L1242.37,1059.71L1243.07,1060.13L1243.76,1059.79L1244.45,1059.74L1245.14,1059.29L1245.84,1059.62L1246.53,1060.40L1247.22,1059.35L1247.91,1060.18L1248.61,1059.04L1249.30,1060.03L1249.99,1059.79L1250.68,1059.87L1251.38,1059.73L1252.07,1058.87L1252.76,1059.08L1253.45,1059.20L1254.14,1059.33L1254.84,1060.20L1255.53,1059.73L1256.22,1059.75L1256.91,1059.95L1257.61,1059.26L1258.30,1059.84L1258.99,1059.83L1259.68,1059.98L1260.38,1060.46L1261.07,1059.23L1261.76,1058.89L1262.45,1059.42L1263.15,1059.96L1263.84,1060.77L1264.53,1059.43L1265.22,1058.95L1265.92,1059.38L1266.61,1059.08L1267.30,1058.83L1267.99,1058.99L1268.69,1059.72L1269.38,1059.03L1270.07,1059.16L1270.76,1060.24L1271.46,1059.71L1272.15,1060.19L1272.84,1059.58L1273.53,1059.26L1274.23,1060.02L1274.92,1060.48L1275.61,1058.93L1276.30,1059.35L1277.00,1058.85L1277.69,1060.15L1278.38,1059.04L1279.08,1058.57L1279.77,1058.60L1280.46,1059.63L1281.15,1059.41L1281.85,1059.61L1282.54,1059.07L1283.23,1059.05L1283.92,1059.49L1284.62,1060.17L1285.31,1059.19L1286.00,1059.75L1286.69,1059.24L1287.38,1059.41L1288.08,1058.78L1288.77,1059.01L1289.46,1059.74L1290.15,1059.37L1290.85,1058.71L1291.54,1059.78L1292.23,1059.33L1292.92,1058.98L1293.62,1058.95L1294.31,1059.29L1295.00,1060.15L1295.70,1060.12L1296.39,1059.42L1297.08,1059.35L1297.77,1058.35L1298.47,1059.94L1299.16,1059.01L1299.85,1059.18L1300.54,1060.31L1301.24,1059.92L1301.93,1059.46L1302.62,1059.76L1303.31,1059.61L1304.01,1059.32L1304.70,1059.91L1305.39,1059.32L1306.08,1059.83L1306.78,1059.79L1307.47,1059.29L1308.16,1059.80L1308.85,1059.40L1309.55,1058.79L1310.24,1059.52L1310.93,1059.60L1311.62,1059.19L1312.32,1059.71L1313.01,1059.03L1313.70,1060.13L1314.39,1059.25L1315.09,1059.77L1315.78,1059.91L1316.47,1058.71L1317.16,1059.93L1317.86,1058.72L1318.55,1059.23L1319.24,1058.86L1319.93,1059.99L1320.62,1058.98L1321.32,1058.86L1322.01,1059.59L1322.70,1059.59L1323.39,1058.39L1324.09,1059.45L1324.78,1059.73L1325.47,1059.83L1326.16,1059.33L1326.86,1059.38L1327.55,1059.45L1328.24,1058.73L1328.93,1059.69L1329.63,1059.31L1330.32,1058.86L1331.01,1060.00L1331.70,1059.05L1332.40,1058.68L1333.09,1060.17L1333.78,1060.05L1334.47,1060.02L1335.17,1060.39L1335.86,1059.32L1336.55,1060.40L1337.24,1059.30L1337.94,1058.86L1338.63,1060.29L1339.32,1059.68L1340.01,1060.43L1340.71,1059.17L1341.40,1059.88L1342.09,1059.66L1342.79,1059.51L1343.48,1059.28L1344.17,1059.70L1344.86,1059.53L1345.56,1059.79L1346.25,1059.48L1346.94,1060.08L1347.63,1059.51L1348.33,1060.43L1349.02,1059.76L1349.71,1058.64L1350.40,1059.50L1351.10,1060.12L1351.79,1059.42L1352.48,1059.99L1353.17,1060.30L1353.87,1059.88L1354.56,1059.19L1355.25,1059.36L1355.94,1059.58L1356.63,1059.97L1357.33,1060.04L1358.02,1058.91L1358.71,1059.42L1359.40,1059.98L1360.10,1060.52L1360.79,1060.17L1361.48,1058.38L1362.17,1060.07L1362.87,1059.57L1363.56,1059.44L1364.25,1059.61L1364.94,1059.66L1365.64,1060.17L1366.33,1060.02L1367.02,1058.75L1367.71,1059.89L1368.41,1059.14L1369.10,1060.32L1369.79,1059.66L1370.48,1059.41L1371.18,1059.05L1371.87,1060.06L1372.56,1059.26L1373.26,1059.36L1373.95,1059.88L1374.64,1059.31L1375.33,1059.95L1376.03,1059.91L1376.72,1059.54L1377.41,1060.80L1378.10,1059.59L1378.80,1060.00L1379.49,1060.22L1380.18,1059.73L1380.87,1059.18L1381.57,1059.72L1382.26,1058.95L1382.95,1060.07L1383.64,1060.15L1384.34,1058.81L1385.03,1059.35L1385.72,1059.10L1386.41,1059.92L1387.11,1059.16L1387.80,1059.41L1388.49,1059.23L1389.18,1059.52L1389.88,1058.97L1390.57,1059.84L1391.26,1059.98L1391.95,1060.22L1392.64,1059.00L1393.34,1059.88L1394.03,1060.02L1394.72,1059.97L1395.41,1059.74L1396.11,1060.13L1396.80,1059.67L1397.49,1059.83L1398.18,1059.79L1398.88,1059.98L1399.57,1059.52L1400.26,1059.75L1400.95,1059.48L1401.65,1059.42L1402.34,1059.38L1403.03,1060.55L1403.72,1059.78L1404.42,1059.91L1405.11,1059.17L1405.80,1060.27L1406.50,1059.87L1407.19,1059.67L1407.88,1059.69L1408.57,1059.07L1409.27,1059.74L1409.96,1059.09L1410.65,1060.22L1411.34,1060.38L1412.04,1058.97L1412.73,1059.33L1413.42,1059.31L1414.11,1059.48L1414.81,1059.31L1415.50,1060.10L1416.19,1059.09L1416.88,1059.78L1417.58,1059.08L1418.27,1059.49L1418.96,1060.45L1419.65,1060.13L1420.35,1059.01L1421.04,1059.60L1421.73,1059.72L1422.42,1059.42L1423.12,1059.73L1423.81,1059.79L1424.50,1059.49L1425.19,1059.47L1425.88,1058.83L1426.58,1059.51L1427.27,1058.66L1427.96,1058.70L1428.65,1058.74L1429.35,1059.04L1430.04,1059.47L1430.73,1059.47L1431.42,1059.60L1432.12,1059.88L1432.81,1059.57L1433.50,1059.83L1434.19,1058.77L1434.89,1059.29L1435.58,1059.74L1436.27,1060.43L1436.96,1059.56L1437.66,1059.73L1438.35,1060.04L1439.04,1060.06L1439.73,1060.58L1440.43,1059.27L1441.12,1059.57L1441.81,1058.33L1442.51,1059.55L1443.20,1059.60L1443.89,1058.86L1444.58,1059.47L1445.28,1059.46L1445.97,1059.71L1446.66,1059.82L1447.35,1058.84L1448.05,1059.07L1448.74,1058.74L1449.43,1059.70L1450.12,1059.52L1450.82,1059.94L1451.51,1059.09L1452.20,1060.18L1452.89,1059.27L1453.59,1059.03L1454.28,1058.88L1454.97,1059.97L1455.66,1059.03L1456.36,1059.87L1457.05,1059.89L1457.74,1060.15L1458.43,1059.00L1459.12,1058.77L1459.82,1059.81L1460.51,1059.89L1461.20,1059.69L1461.89,1058.37L1462.59,1059.07L1463.28,1059.79L1463.97,1060.37L1464.66,1059.85L1465.36,1058.98L1466.05,1058.67L1466.74,1059.66L1467.43,1059.86L1468.13,1059.77L1468.82,1060.41L1469.51,1059.11L1470.20,1060.04L1470.90,1059.04L1471.59,1060.33L1472.28,1060.13L1472.97,1059.40L1473.67,1059.89L1474.36,1059.17L1475.05,1059.53L1475.75,1060.08L1476.44,1059.25L1477.13,1059.14L1477.82,1060.42L1478.52,1058.69L1479.21,1059.30L1479.90,1059.18L1480.59,1060.40L1481.29,1059.87L1481.98,1059.70L1482.67,1059.03L1483.36,1060.21L1484.06,1059.95L1484.75,1060.48L1485.44,1059.65L1486.13,1059.37L1486.83,1060.32L1487.52,1059.81L1488.21,1059.30L1488.90,1058.80L1489.60,1059.23L1490.29,1059.68L1490.98,1060.08L1491.67,1059.97L1492.37,1059.84L1493.06,1059.47L1493.75,1059.56L1493.75,1060.00Z" fill="url(#rb)"/>
<path d="M316.50,1060.12L317.19,1059.76L317.88,1060.10L318.58,1060.14L319.27,1060.43L319.96,1060.10L320.65,1059.48L321.35,1059.80L322.04,1059.52L322.73,1059.88L323.43,1059.81L324.12,1059.91L324.81,1060.77L325.50,1059.60L326.19,1059.76L326.89,1059.77L327.58,1060.78L328.27,1060.81L328.96,1060.41L329.66,1060.21L330.35,1059.85L331.04,1060.02L331.74,1059.75L332.43,1060.30L333.12,1059.85L333.81,1059.81L334.50,1060.30L335.20,1059.20L335.89,1059.74L336.58,1059.44L337.27,1060.28L337.97,1060.34L338.66,1060.16L339.35,1060.04L340.05,1059.70L340.74,1059.88L341.43,1060.20L342.12,1060.44L342.81,1060.24L343.51,1059.43L344.20,1060.37L344.89,1059.88L345.58,1059.80L346.28,1060.69L346.97,1059.97L347.66,1059.39L348.36,1060.93L349.05,1060.14L349.74,1060.04L350.43,1060.37L351.12,1059.76L351.82,1060.02L352.51,1060.67L353.20,1059.61L353.89,1059.68L354.59,1059.55L355.28,1059.32L355.97,1059.82L356.67,1059.93L357.36,1060.59L358.05,1059.70L358.74,1060.27L359.44,1060.20L360.13,1060.58L360.82,1060.44L361.51,1060.24L362.20,1059.39L362.90,1060.93L363.59,1060.67L364.28,1059.88L364.98,1059.32L365.67,1059.72L366.36,1060.87L367.05,1061.16L367.75,1059.82L368.44,1060.33L369.13,1060.51L369.82,1059.53L370.51,1059.47L371.21,1059.91L371.90,1059.87L372.59,1059.78L373.29,1059.24L373.98,1059.70L374.67,1059.74L375.36,1059.73L376.06,1060.71L376.75,1059.39L377.44,1059.54L378.13,1059.74L378.82,1060.90L379.52,1060.28L380.21,1059.59L380.90,1060.82L381.60,1060.07L382.29,1059.51L382.98,1060.59L383.67,1059.23L384.37,1059.72L385.06,1060.05L385.75,1059.83L386.44,1059.68L387.13,1059.92L387.83,1059.44L388.52,1060.28L389.21,1060.17L389.90,1059.49L390.60,1059.96L391.29,1060.38L391.98,1059.53L392.68,1059.29L393.37,1060.18L394.06,1060.61L394.75,1060.04L395.44,1060.04L396.14,1060.11L396.83,1059.32L397.52,1060.45L398.22,1059.38L398.91,1060.56L399.60,1060.34L400.29,1059.68L400.99,1059.44L401.68,1059.57L402.37,1059.81L403.06,1059.90L403.75,1059.90L404.45,1059.70L405.14,1060.05L405.83,1059.84L406.52,1059.70L407.22,1059.96L407.91,1059.61L408.60,1059.70L409.30,1059.03L409.99,1059.81L410.68,1060.16L411.37,1060.13L412.06,1059.97L412.76,1059.53L413.45,1060.12L414.14,1059.78L414.83,1059.10L415.53,1061.15L416.22,1060.48L416.91,1059.84L417.61,1059.77L418.30,1059.84L418.99,1060.16L419.68,1059.65L420.38,1059.82L421.07,1060.20L421.76,1058.82L422.45,1059.79L423.14,1060.21L423.84,1060.00L424.53,1060.05L425.22,1059.98L425.92,1061.22L426.61,1060.17L427.30,1059.48L427.99,1060.49L428.69,1059.98L429.38,1059.50L430.07,1059.55L430.76,1059.25L431.45,1060.73L432.15,1060.11L432.84,1060.10L433.53,1059.65L434.23,1059.43L434.92,1061.19L435.61,1059.43L436.30,1060.61L437.00,1059.62L437.69,1060.63L438.38,1059.85L439.07,1059.38L439.76,1060.00L440.46,1059.84L441.15,1059.56L441.84,1059.87L442.53,1059.97L443.23,1059.22L443.92,1059.44L444.61,1060.07L445.31,1058.65L446.00,1060.46L446.69,1059.50L447.38,1060.05L448.07,1059.86L448.77,1059.60L449.46,1059.82L450.15,1059.63L450.85,1060.63L451.54,1060.62L452.23,1059.63L452.92,1060.37L453.62,1060.40L454.31,1060.60L455.00,1059.33L455.69,1059.57L456.38,1059.23L457.08,1060.35L457.77,1059.91L458.46,1060.44L459.15,1059.56L459.85,1059.17L460.54,1060.32L461.23,1059.18L461.93,1059.45L462.62,1059.99L463.31,1060.82L464.00,1059.25L464.69,1059.95L465.39,1060.18L466.08,1059.72L466.77,1059.71L467.47,1059.20L468.16,1060.37L468.85,1059.37L469.54,1059.21L470.24,1059.22L470.93,1059.98L471.62,1060.24L472.31,1059.42L473.00,1059.84L473.70,1059.83L474.39,1059.23L475.08,1060.01L475.77,1060.96L476.47,1060.07L477.16,1060.75L477.85,1059.50L478.54,1059.74L479.24,1060.17L479.93,1059.89L480.62,1059.49L481.31,1059.84L482.01,1059.26L482.70,1059.91L483.39,1059.39L484.09,1059.18L484.78,1059.13L485.47,1060.18L486.16,1059.46L486.86,1060.74L487.55,1060.37L488.24,1060.78L488.93,1059.37L489.62,1060.44L490.32,1059.87L491.01,1059.95L491.70,1059.88L492.39,1060.14L493.09,1059.75L493.78,1059.03L494.47,1059.84L495.16,1059.61L495.86,1059.39L496.55,1059.95L497.24,1060.44L497.94,1060.11L498.63,1059.35L499.32,1060.61L500.01,1060.12L500.71,1059.38L501.40,1059.48L502.09,1059.84L502.78,1059.47L503.48,1059.76L504.17,1060.39L504.86,1060.56L505.55,1060.13L506.25,1059.41L506.94,1060.10L507.63,1060.25L508.32,1060.19L509.01,1060.54L509.71,1059.88L510.40,1060.38L511.09,1059.66L511.78,1060.92L512.48,1059.67L513.17,1060.12L513.86,1060.72L514.56,1059.48L515.25,1059.94L515.94,1060.85L516.63,1060.22L517.33,1059.68L518.02,1060.02L518.71,1059.45L519.40,1059.46L520.10,1059.50L520.79,1059.65L521.48,1059.18L522.17,1059.50L522.87,1059.59L523.56,1060.77L524.25,1059.38L524.94,1059.19L525.63,1059.93L526.33,1060.01L527.02,1058.89L527.71,1060.61L528.40,1059.57L529.10,1058.66L529.79,1060.22L530.48,1059.46L531.17,1058.90L531.87,1059.84L532.56,1059.52L533.25,1059.36L533.94,1060.20L534.64,1059.81L535.33,1059.64L536.02,1059.39L536.72,1059.78L537.41,1059.86L538.10,1060.24L538.79,1059.93L539.49,1059.35L540.18,1059.71L540.87,1060.15L541.56,1060.15L542.25,1058.51L542.95,1059.22L543.64,1059.45L544.33,1060.95L545.02,1059.46L545.72,1059.52L546.41,1058.96L547.10,1059.54L547.79,1059.77L548.49,1059.50L549.18,1060.64L549.87,1059.25L550.57,1059.58L551.26,1060.06L551.95,1059.11L552.64,1058.89L553.34,1060.38L554.03,1060.03L554.72,1059.59L555.41,1059.63L556.11,1059.90L556.80,1060.17L557.49,1058.73L558.18,1059.23L558.88,1060.27L559.57,1060.33L560.26,1058.91L560.95,1059.24L561.64,1058.86L562.34,1059.32L563.03,1060.10L563.72,1059.57L564.41,1060.70L565.11,1060.04L565.80,1059.72L566.49,1059.44L567.18,1060.02L567.88,1059.74L568.57,1059.46L569.26,1059.49L569.96,1059.36L570.65,1059.55L571.34,1059.79L572.03,1059.26L572.73,1059.59L573.42,1059.99L574.11,1059.88L574.80,1059.57L575.50,1059.60L576.19,1059.46L576.88,1059.51L577.57,1059.41L578.26,1059.53L578.96,1060.03L579.65,1059.22L580.34,1058.89L581.04,1059.15L581.73,1059.41L582.42,1059.08L583.11,1059.70L583.81,1060.09L584.50,1059.14L585.19,1059.56L585.88,1058.74L586.58,1059.54L587.27,1060.21L587.96,1059.42L588.65,1058.15L589.35,1059.01L590.04,1059.41L590.73,1059.07L591.42,1058.41L592.12,1058.35L592.81,1058.43L593.50,1057.71L594.19,1057.91L594.88,1058.00L595.58,1057.38L596.27,1056.48L596.96,1056.35L597.65,1055.85L598.35,1056.34L599.04,1055.43L599.73,1054.55L600.42,1054.56L601.12,1053.44L601.81,1053.15L602.50,1052.45L603.19,1052.35L603.89,1050.38L604.58,1050.19L605.27,1049.95L605.96,1048.73L606.66,1046.31L607.35,1046.27L608.04,1044.13L608.74,1042.37L609.43,1040.96L610.12,1039.53L610.81,1036.79L611.50,1034.49L612.20,1031.82L612.89,1029.57L613.58,1027.44L614.27,1024.49L614.97,1021.98L615.66,1019.34L616.35,1016.41L617.05,1013.32L617.74,1009.41L618.43,1006.51L619.12,1002.38L619.82,997.93L620.51,994.27L621.20,989.25L621.89,985.28L622.59,979.77L623.28,974.15L623.97,968.98L624.66,963.95L625.36,958.52L626.05,953.29L626.74,945.56L627.43,939.55L628.12,932.08L628.82,925.15L629.51,916.00L630.20,906.70L630.89,893.89L631.59,880.98L632.28,868.76L632.97,854.11L633.66,840.48L634.36,829.22L635.05,817.82L635.74,806.80L636.43,796.37L637.13,786.57L637.82,775.30L638.51,763.90L639.20,751.38L639.90,737.84L640.59,722.78L641.28,707.22L641.98,691.75L642.67,673.67L643.36,655.40L644.05,636.02L644.75,615.17L645.44,593.48L646.13,569.75L646.82,545.40L647.51,518.49L648.21,491.03L648.90,465.43L649.59,441.61L650.29,419.33L650.98,398.82L651.67,378.04L652.36,359.05L653.06,340.98L653.75,323.88L654.44,307.09L655.13,292.72L655.83,276.27L656.52,260.15L657.21,245.41L657.90,229.25L658.60,215.15L659.29,203.68L659.98,193.21L660.67,186.61L661.37,183.27L662.06,184.31L662.75,189.69L663.44,198.65L664.13,209.70L664.83,223.53L665.52,238.84L666.21,256.37L666.90,275.98L667.60,298.44L668.29,324.52L668.98,355.58L669.67,388.51L670.37,419.73L671.06,449.11L671.75,475.50L672.44,500.29L673.14,524.62L673.83,546.04L674.52,569.42L675.21,589.97L675.91,611.28L676.60,631.24L677.29,653.14L677.99,671.83L678.68,690.00L679.37,707.38L680.06,722.67L680.75,738.27L681.45,750.82L682.14,762.81L682.83,773.50L683.52,783.74L684.22,793.49L684.91,802.05L685.60,811.29L686.30,818.27L686.99,827.19L687.68,834.22L688.37,840.87L689.07,849.57L689.76,857.05L690.45,864.15L691.14,872.38L691.84,880.38L692.53,887.27L693.22,894.21L693.91,900.84L694.61,907.74L695.30,912.18L695.99,917.41L696.68,923.05L697.38,927.49L698.07,932.15L698.76,935.37L699.45,940.29L700.14,943.35L700.84,947.47L701.53,951.00L702.22,953.68L702.91,956.68L703.61,960.53L704.30,963.81L704.99,965.64L705.68,968.07L706.38,969.40L707.07,969.99L707.76,971.16L708.45,972.84L709.15,972.30L709.84,974.09L710.53,974.32L711.23,975.49L711.92,975.57L712.61,976.62L713.30,975.03L714.00,975.19L714.69,976.23L715.38,976.04L716.07,975.65L716.76,973.75L717.46,973.86L718.15,972.90L718.84,972.17L719.54,971.15L720.23,970.57L720.92,968.78L721.61,967.85L722.31,965.13L723.00,962.50L723.69,959.72L724.38,957.20L725.08,954.54L725.77,950.89L726.46,947.85L727.15,943.33L727.85,940.02L728.54,936.64L729.23,932.92L729.92,929.11L730.62,925.29L731.31,921.13L732.00,917.01L732.69,913.17L733.38,909.48L734.08,905.11L734.77,902.84L735.46,898.88L736.15,893.92L736.85,892.58L737.54,888.33L738.23,884.41L738.92,880.84L739.62,877.16L740.31,873.92L741.00,870.08L741.69,866.71L742.39,862.84L743.08,860.63L743.77,856.64L744.46,852.71L745.16,849.74L745.85,846.27L746.54,842.00L747.24,839.19L747.93,835.14L748.62,831.69L749.31,828.54L750.00,825.08L750.70,822.02L751.39,819.29L752.08,815.22L752.77,811.61L753.47,808.74L754.16,805.21L754.85,801.52L755.55,799.14L756.24,795.29L756.93,791.68L757.62,789.99L758.32,786.83L759.01,784.20L759.70,780.59L760.39,778.45L761.09,775.41L761.78,773.49L762.47,770.48L763.16,767.86L763.86,766.20L764.55,762.13L765.24,760.04L765.93,759.11L766.62,755.74L767.32,754.20L768.01,752.08L768.70,750.46L769.39,749.91L770.09,747.91L770.78,745.80L771.47,745.64L772.16,744.70L772.86,743.72L773.55,742.53L774.24,740.65L774.93,738.89L775.63,738.49L776.32,737.57L777.01,735.58L777.70,736.01L778.40,735.17L779.09,733.68L779.78,732.82L780.48,732.79L781.17,732.09L781.86,730.61L782.55,729.93L783.25,730.06L783.94,728.88L784.63,728.48L785.32,727.45L786.01,727.26L786.71,726.80L787.40,726.55L788.09,725.50L788.79,725.04L789.48,725.69L790.17,724.87L790.86,725.50L791.56,724.91L792.25,724.40L792.94,723.86L793.63,724.67L794.33,724.38L795.02,724.11L795.71,724.85L796.40,723.98L797.10,724.24L797.79,723.63L798.48,724.33L799.17,724.71L799.87,723.66L800.56,723.53L801.25,723.95L801.94,723.25L802.63,723.89L803.33,724.14L804.02,723.68L804.71,724.83L805.40,724.52L806.10,724.34L806.79,724.07L807.48,724.77L808.17,724.74L808.87,725.44L809.56,725.20L810.25,724.76L810.94,726.20L811.64,724.94L812.33,726.74L813.02,726.71L813.71,726.93L814.41,726.82L815.10,728.29L815.79,729.05L816.49,728.03L817.18,728.28L817.87,728.71L818.56,728.06L819.25,729.64L819.95,729.98L820.64,730.00L821.33,730.65L822.02,730.36L822.72,732.19L823.41,732.12L824.10,734.04L824.80,732.25L825.49,733.22L826.18,732.93L826.87,732.70L827.57,734.18L828.26,734.72L828.95,735.26L829.64,735.87L830.34,736.22L831.03,736.04L831.72,736.82L832.41,737.29L833.11,737.91L833.80,737.88L834.49,738.61L835.18,739.47L835.88,739.61L836.57,740.58L837.26,741.66L837.95,740.93L838.64,742.02L839.34,743.34L840.03,742.92L840.72,743.92L841.41,745.51L842.11,744.56L842.80,745.85L843.49,746.23L844.19,747.25L844.88,748.11L845.57,749.50L846.26,748.93L846.96,750.11L847.65,750.98L848.34,751.38L849.03,752.26L849.73,752.72L850.42,754.03L851.11,754.66L851.80,756.54L852.50,756.52L853.19,756.83L853.88,757.39L854.57,759.14L855.26,759.94L855.96,760.03L856.65,761.94L857.34,762.39L858.03,762.91L858.73,764.74L859.42,765.18L860.11,767.19L860.80,767.79L861.50,769.01L862.19,770.00L862.88,770.60L863.58,771.09L864.27,773.75L864.96,774.85L865.65,775.47L866.35,777.42L867.04,777.83L867.73,778.98L868.42,780.61L869.12,781.43L869.81,783.69L870.50,783.78L871.19,786.18L871.88,787.03L872.58,788.26L873.27,789.51L873.96,790.24L874.65,792.02L875.35,793.67L876.04,794.65L876.73,795.60L877.42,797.88L878.12,799.22L878.81,800.32L879.50,802.37L880.20,804.72L880.89,804.46L881.58,806.22L882.27,809.93L882.97,810.63L883.66,812.07L884.35,813.49L885.04,815.33L885.74,817.51L886.43,819.62L887.12,820.78L887.81,822.06L888.50,824.86L889.20,826.59L889.89,827.85L890.58,830.56L891.27,831.51L891.97,833.37L892.66,834.70L893.35,837.05L894.04,838.91L894.74,840.44L895.43,842.04L896.12,844.11L896.82,845.54L897.51,846.94L898.20,848.50L898.89,850.03L899.59,853.07L900.28,854.73L900.97,857.61L901.66,857.35L902.36,860.54L903.05,862.12L903.74,863.79L904.43,866.65L905.12,867.72L905.82,869.92L906.51,872.77L907.20,873.70L907.89,875.23L908.59,878.69L909.28,879.35L909.97,881.60L910.66,883.42L911.36,885.37L912.05,886.87L912.74,889.52L913.44,890.87L914.13,893.36L914.82,894.65L915.51,897.22L916.21,898.66L916.90,899.53L917.59,901.88L918.28,903.86L918.98,906.00L919.67,907.47L920.36,908.62L921.05,909.87L921.75,911.72L922.44,913.26L923.13,915.12L923.82,916.02L924.51,918.42L925.21,920.05L925.90,920.90L926.59,922.82L927.28,924.51L927.98,926.16L928.67,927.50L929.36,928.56L930.05,930.17L930.75,932.38L931.44,933.05L932.13,934.60L932.83,936.60L933.52,937.16L934.21,939.07L934.90,940.48L935.60,941.32L936.29,942.43L936.98,944.75L937.67,945.54L938.37,947.50L939.06,947.28L939.75,949.92L940.44,950.40L941.13,952.55L941.83,953.11L942.52,953.68L943.21,957.18L943.90,957.39L944.60,958.15L945.29,959.64L945.98,961.11L946.67,960.96L947.37,963.14L948.06,965.14L948.75,965.12L949.45,967.51L950.14,967.30L950.83,969.28L951.52,970.07L952.22,970.68L952.91,972.35L953.60,974.18L954.29,975.43L954.99,975.16L955.68,976.46L956.37,978.27L957.06,978.54L957.75,979.76L958.45,980.73L959.14,983.14L959.83,983.23L960.52,983.66L961.22,984.73L961.91,985.64L962.60,988.18L963.29,987.89L963.99,988.67L964.68,988.62L965.37,991.18L966.07,991.77L966.76,992.47L967.45,992.93L968.14,994.40L968.84,994.47L969.53,996.18L970.22,996.47L970.91,997.60L971.61,998.02L972.30,999.14L972.99,1000.26L973.68,999.68L974.38,1000.72L975.07,1001.78L975.76,1002.06L976.45,1002.33L977.14,1003.89L977.84,1004.11L978.53,1004.43L979.22,1005.06L979.91,1006.09L980.61,1007.56L981.30,1006.62L981.99,1007.69L982.69,1008.48L983.38,1009.26L984.07,1009.65L984.76,1010.63L985.46,1011.56L986.15,1012.07L986.84,1012.66L987.53,1013.31L988.23,1014.22L988.92,1014.02L989.61,1015.58L990.30,1015.30L991.00,1016.73L991.69,1016.72L992.38,1016.87L993.07,1018.05L993.76,1019.12L994.46,1019.37L995.15,1019.93L995.84,1021.42L996.53,1021.49L997.23,1021.72L997.92,1022.60L998.61,1022.92L999.30,1023.18L1000.00,1023.72L1000.69,1024.20L1001.38,1024.89L1002.08,1025.82L1002.77,1026.21L1003.46,1026.83L1004.15,1027.34L1004.85,1027.75L1005.54,1028.94L1006.23,1028.74L1006.92,1029.03L1007.62,1029.89L1008.31,1029.85L1009.00,1029.99L1009.69,1030.70L1010.38,1030.03L1011.08,1032.59L1011.77,1031.83L1012.46,1032.94L1013.15,1031.98L1013.85,1031.54L1014.54,1034.29L1015.23,1033.39L1015.92,1033.54L1016.62,1034.24L1017.31,1034.16L1018.00,1035.78L1018.70,1034.64L1019.39,1035.16L1020.08,1035.62L1020.77,1036.20L1021.47,1035.92L1022.16,1036.73L1022.85,1036.68L1023.54,1037.30L1024.24,1038.38L1024.93,1037.62L1025.62,1037.78L1026.31,1037.78L1027.01,1038.81L1027.70,1038.67L1028.39,1038.63L1029.08,1039.10L1029.78,1038.84L1030.47,1038.74L1031.16,1040.35L1031.85,1041.07L1032.55,1040.02L1033.24,1039.95L1033.93,1040.48L1034.62,1040.78L1035.32,1041.69L1036.01,1041.97L1036.70,1041.47L1037.39,1042.55L1038.09,1043.21L1038.78,1043.06L1039.47,1041.67L1040.16,1042.17L1040.86,1043.61L1041.55,1043.86L1042.24,1043.64L1042.93,1044.33L1043.62,1043.59L1044.32,1044.45L1045.01,1045.14L1045.70,1044.24L1046.39,1045.34L1047.09,1045.17L1047.78,1045.49L1048.47,1045.83L1049.16,1045.74L1049.86,1046.41L1050.55,1047.14L1051.24,1047.50L1051.93,1047.25L1052.63,1047.20L1053.32,1047.04L1054.01,1047.18L1054.70,1047.12L1055.40,1047.49L1056.09,1048.09L1056.78,1048.21L1057.47,1049.03L1058.17,1048.27L1058.86,1048.12L1059.55,1048.24L1060.24,1048.69L1060.94,1048.85L1061.63,1048.47L1062.32,1049.04L1063.01,1048.84L1063.71,1049.04L1064.40,1049.34L1065.09,1048.96L1065.78,1049.96L1066.48,1049.98L1067.17,1050.31L1067.86,1050.42L1068.55,1049.44L1069.25,1049.46L1069.94,1050.38L1070.63,1050.24L1071.33,1050.07L1072.02,1050.35L1072.71,1050.27L1073.40,1051.53L1074.10,1051.34L1074.79,1050.94L1075.48,1050.58L1076.17,1051.31L1076.87,1051.86L1077.56,1051.73L1078.25,1051.97L1078.94,1052.16L1079.63,1051.16L1080.33,1052.26L1081.02,1052.06L1081.71,1051.16L1082.40,1051.72L1083.10,1052.21L1083.79,1052.76L1084.48,1052.38L1085.17,1051.92L1085.87,1052.49L1086.56,1052.29L1087.25,1052.94L1087.95,1052.85L1088.64,1053.29L1089.33,1053.11L1090.02,1052.81L1090.72,1054.19L1091.41,1053.66L1092.10,1053.63L1092.79,1054.11L1093.49,1054.10L1094.18,1053.70L1094.87,1053.24L1095.56,1053.98L1096.26,1054.23L1096.95,1055.21L1097.64,1053.70L1098.33,1054.66L1099.03,1054.81L1099.72,1055.42L1100.41,1055.02L1101.10,1055.60L1101.80,1055.16L1102.49,1055.07L1103.18,1055.36L1103.87,1055.33L1104.57,1055.95L1105.26,1054.97L1105.95,1056.02L1106.64,1056.64L1107.34,1055.96L1108.03,1056.30L1108.72,1056.48L1109.41,1056.24L1110.11,1056.01L1110.80,1056.75L1111.49,1056.32L1112.18,1055.65L1112.88,1056.04L1113.57,1056.48L1114.26,1056.40L1114.95,1056.57L1115.64,1056.58L1116.34,1056.27L1117.03,1056.70L1117.72,1057.82L1118.41,1056.76L1119.11,1057.20L1119.80,1056.53L1120.49,1057.16L1121.18,1056.85L1121.88,1055.95L1122.57,1057.49L1123.26,1057.57L1123.95,1057.74L1124.65,1058.24L1125.34,1058.04L1126.03,1057.03L1126.72,1057.54L1127.42,1058.15L1128.11,1058.00L1128.80,1057.06L1129.49,1057.74L1130.19,1057.59L1130.88,1057.30L1131.57,1056.85L1132.26,1056.61L1132.96,1057.07L1133.65,1057.51L1134.34,1057.53L1135.03,1056.80L1135.73,1057.01L1136.42,1057.85L1137.11,1057.52L1137.80,1057.63L1138.50,1057.76L1139.19,1058.05L1139.88,1058.46L1140.58,1058.12L1141.27,1058.61L1141.96,1057.35L1142.65,1057.69L1143.35,1058.53L1144.04,1057.34L1144.73,1057.60L1145.42,1058.92L1146.12,1057.20L1146.81,1057.70L1147.50,1057.14L1148.19,1058.70L1148.88,1057.90L1149.58,1057.97L1150.27,1058.09L1150.96,1058.13L1151.65,1057.73L1152.35,1058.94L1153.04,1058.84L1153.73,1058.93L1154.42,1058.56L1155.12,1058.60L1155.81,1058.17L1156.50,1058.24L1157.20,1058.37L1157.89,1058.71L1158.58,1058.62L1159.27,1057.99L1159.97,1058.10L1160.66,1058.43L1161.35,1058.64L1162.04,1057.79L1162.74,1058.80L1163.43,1058.24L1164.12,1058.03L1164.81,1058.71L1165.51,1058.22L1166.20,1059.14L1166.89,1058.16L1167.58,1058.56L1168.28,1059.40L1168.97,1058.37L1169.66,1059.11L1170.35,1058.12L1171.05,1059.05L1171.74,1058.82L1172.43,1058.63L1173.12,1058.93L1173.82,1058.67L1174.51,1059.07L1175.20,1058.51L1175.89,1058.84L1176.59,1058.75L1177.28,1060.15L1177.97,1058.34L1178.66,1058.88L1179.36,1059.74L1180.05,1058.88L1180.74,1058.72L1181.43,1058.45L1182.12,1059.46L1182.82,1058.25L1183.51,1059.06L1184.20,1057.88L1184.89,1059.08L1185.59,1058.70L1186.28,1059.20L1186.97,1059.56L1187.66,1058.54L1188.36,1058.64L1189.05,1058.36L1189.74,1058.69L1190.43,1059.36L1191.13,1059.88L1191.82,1059.42L1192.51,1059.44L1193.20,1059.51L1193.90,1058.87L1194.59,1059.00L1195.28,1059.28L1195.97,1059.08L1196.67,1059.24L1197.36,1059.08L1198.05,1058.84L1198.74,1058.75L1199.44,1059.52L1200.13,1059.90L1200.82,1058.55L1201.51,1059.16L1202.21,1058.71L1202.90,1059.99L1203.59,1059.38L1204.28,1059.22L1204.98,1059.91L1205.67,1059.48L1206.36,1058.91L1207.05,1058.75L1207.75,1058.52L1208.44,1059.66L1209.13,1059.92L1209.83,1059.03L1210.52,1058.84L1211.21,1059.19L1211.90,1059.89L1212.60,1058.92L1213.29,1058.92L1213.98,1059.04L1214.67,1059.53L1215.37,1059.16L1216.06,1058.94L1216.75,1059.57L1217.44,1060.17L1218.13,1059.17L1218.83,1059.10L1219.52,1059.32L1220.21,1058.92L1220.90,1059.61L1221.60,1059.38L1222.29,1059.48L1222.98,1059.08L1223.67,1058.61L1224.37,1059.47L1225.06,1058.40L1225.75,1058.65L1226.45,1059.00L1227.14,1059.10L1227.83,1058.55L1228.52,1059.46L1229.22,1059.43L1229.91,1059.88L1230.60,1059.17L1231.29,1058.76L1231.99,1059.15L1232.68,1059.20L1233.37,1059.49L1234.06,1059.32L1234.76,1060.07L1235.45,1058.92L1236.14,1059.60L1236.83,1059.93L1237.53,1059.77L1238.22,1059.81L1238.91,1059.03L1239.60,1058.94L1240.30,1060.06L1240.99,1059.00L1241.68,1059.02L1242.37,1059.71L1243.07,1060.13L1243.76,1059.79L1244.45,1059.74L1245.14,1059.29L1245.84,1059.62L1246.53,1060.40L1247.22,1059.35L1247.91,1060.18L1248.61,1059.04L1249.30,1060.03L1249.99,1059.79L1250.68,1059.87L1251.38,1059.73L1252.07,1058.87L1252.76,1059.08L1253.45,1059.20L1254.14,1059.33L1254.84,1060.20L1255.53,1059.73L1256.22,1059.75L1256.91,1059.95L1257.61,1059.26L1258.30,1059.84L1258.99,1059.83L1259.68,1059.98L1260.38,1060.46L1261.07,1059.23L1261.76,1058.89L1262.45,1059.42L1263.15,1059.96L1263.84,1060.77L1264.53,1059.43L1265.22,1058.95L1265.92,1059.38L1266.61,1059.08L1267.30,1058.83L1267.99,1058.99L1268.69,1059.72L1269.38,1059.03L1270.07,1059.16L1270.76,1060.24L1271.46,1059.71L1272.15,1060.19L1272.84,1059.58L1273.53,1059.26L1274.23,1060.02L1274.92,1060.48L1275.61,1058.93L1276.30,1059.35L1277.00,1058.85L1277.69,1060.15L1278.38,1059.04L1279.08,1058.57L1279.77,1058.60L1280.46,1059.63L1281.15,1059.41L1281.85,1059.61L1282.54,1059.07L1283.23,1059.05L1283.92,1059.49L1284.62,1060.17L1285.31,1059.19L1286.00,1059.75L1286.69,1059.24L1287.38,1059.41L1288.08,1058.78L1288.77,1059.01L1289.46,1059.74L1290.15,1059.37L1290.85,1058.71L1291.54,1059.78L1292.23,1059.33L1292.92,1058.98L1293.62,1058.95L1294.31,1059.29L1295.00,1060.15L1295.70,1060.12L1296.39,1059.42L1297.08,1059.35L1297.77,1058.35L1298.47,1059.94L1299.16,1059.01L1299.85,1059.18L1300.54,1060.31L1301.24,1059.92L1301.93,1059.46L1302.62,1059.76L1303.31,1059.61L1304.01,1059.32L1304.70,1059.91L1305.39,1059.32L1306.08,1059.83L1306.78,1059.79L1307.47,1059.29L1308.16,1059.80L1308.85,1059.40L1309.55,1058.79L1310.24,1059.52L1310.93,1059.60L1311.62,1059.19L1312.32,1059.71L1313.01,1059.03L1313.70,1060.13L1314.39,1059.25L1315.09,1059.77L1315.78,1059.91L1316.47,1058.71L1317.16,1059.93L1317.86,1058.72L1318.55,1059.23L1319.24,1058.86L1319.93,1059.99L1320.62,1058.98L1321.32,1058.86L1322.01,1059.59L1322.70,1059.59L1323.39,1058.39L1324.09,1059.45L1324.78,1059.73L1325.47,1059.83L1326.16,1059.33L1326.86,1059.38L1327.55,1059.45L1328.24,1058.73L1328.93,1059.69L1329.63,1059.31L1330.32,1058.86L1331.01,1060.00L1331.70,1059.05L1332.40,1058.68L1333.09,1060.17L1333.78,1060.05L1334.47,1060.02L1335.17,1060.39L1335.86,1059.32L1336.55,1060.40L1337.24,1059.30L1337.94,1058.86L1338.63,1060.29L1339.32,1059.68L1340.01,1060.43L1340.71,1059.17L1341.40,1059.88L1342.09,1059.66L1342.79,1059.51L1343.48,1059.28L1344.17,1059.70L1344.86,1059.53L1345.56,1059.79L1346.25,1059.48L1346.94,1060.08L1347.63,1059.51L1348.33,1060.43L1349.02,1059.76L1349.71,1058.64L1350.40,1059.50L1351.10,1060.12L1351.79,1059.42L1352.48,1059.99L1353.17,1060.30L1353.87,1059.88L1354.56,1059.19L1355.25,1059.36L1355.94,1059.58L1356.63,1059.97L1357.33,1060.04L1358.02,1058.91L1358.71,1059.42L1359.40,1059.98L1360.10,1060.52L1360.79,1060.17L1361.48,1058.38L1362.17,1060.07L1362.87,1059.57L1363.56,1059.44L1364.25,1059.61L1364.94,1059.66L1365.64,1060.17L1366.33,1060.02L1367.02,1058.75L1367.71,1059.89L1368.41,1059.14L1369.10,1060.32L1369.79,1059.66L1370.48,1059.41L1371.18,1059.05L1371.87,1060.06L1372.56,1059.26L1373.26,1059.36L1373.95,1059.88L1374.64,1059.31L1375.33,1059.95L1376.03,1059.91L1376.72,1059.54L1377.41,1060.80L1378.10,1059.59L1378.80,1060.00L1379.49,1060.22L1380.18,1059.73L1380.87,1059.18L1381.57,1059.72L1382.26,1058.95L1382.95,1060.07L1383.64,1060.15L1384.34,1058.81L1385.03,1059.35L1385.72,1059.10L1386.41,1059.92L1387.11,1059.16L1387.80,1059.41L1388.49,1059.23L1389.18,1059.52L1389.88,1058.97L1390.57,1059.84L1391.26,1059.98L1391.95,1060.22L1392.64,1059.00L1393.34,1059.88L1394.03,1060.02L1394.72,1059.97L1395.41,1059.74L1396.11,1060.13L1396.80,1059.67L1397.49,1059.83L1398.18,1059.79L1398.88,1059.98L1399.57,1059.52L1400.26,1059.75L1400.95,1059.48L1401.65,1059.42L1402.34,1059.38L1403.03,1060.55L1403.72,1059.78L1404.42,1059.91L1405.11,1059.17L1405.80,1060.27L1406.50,1059.87L1407.19,1059.67L1407.88,1059.69L1408.57,1059.07L1409.27,1059.74L1409.96,1059.09L1410.65,1060.22L1411.34,1060.38L1412.04,1058.97L1412.73,1059.33L1413.42,1059.31L1414.11,1059.48L1414.81,1059.31L1415.50,1060.10L1416.19,1059.09L1416.88,1059.78L1417.58,1059.08L1418.27,1059.49L1418.96,1060.45L1419.65,1060.13L1420.35,1059.01L1421.04,1059.60L1421.73,1059.72L1422.42,1059.42L1423.12,1059.73L1423.81,1059.79L1424.50,1059.49L1425.19,1059.47L1425.88,1058.83L1426.58,1059.51L1427.27,1058.66L1427.96,1058.70L1428.65,1058.74L1429.35,1059.04L1430.04,1059.47L1430.73,1059.47L1431.42,1059.60L1432.12,1059.88L1432.81,1059.57L1433.50,1059.83L1434.19,1058.77L1434.89,1059.29L1435.58,1059.74L1436.27,1060.43L1436.96,1059.56L1437.66,1059.73L1438.35,1060.04L1439.04,1060.06L1439.73,1060.58L1440.43,1059.27L1441.12,1059.57L1441.81,1058.33L1442.51,1059.55L1443.20,1059.60L1443.89,1058.86L1444.58,1059.47L1445.28,1059.46L1445.97,1059.71L1446.66,1059.82L1447.35,1058.84L1448.05,1059.07L1448.74,1058.74L1449.43,1059.70L1450.12,1059.52L1450.82,1059.94L1451.51,1059.09L1452.20,1060.18L1452.89,1059.27L1453.59,1059.03L1454.28,1058.88L1454.97,1059.97L1455.66,1059.03L1456.36,1059.87L1457.05,1059.89L1457.74,1060.15L1458.43,1059.00L1459.12,1058.77L1459.82,1059.81L1460.51,1059.89L1461.20,1059.69L1461.89,1058.37L1462.59,1059.07L1463.28,1059.79L1463.97,1060.37L1464.66,1059.85L1465.36,1058.98L1466.05,1058.67L1466.74,1059.66L1467.43,1059.86L1468.13,1059.77L1468.82,1060.41L1469.51,1059.11L1470.20,1060.04L1470.90,1059.04L1471.59,1060.33L1472.28,1060.13L1472.97,1059.40L1473.67,1059.89L1474.36,1059.17L1475.05,1059.53L1475.75,1060.08L1476.44,1059.25L1477.13,1059.14L1477.82,1060.42L1478.52,1058.69L1479.21,1059.30L1479.90,1059.18L1480.59,1060.40L1481.29,1059.87L1481.98,1059.70L1482.67,1059.03L1483.36,1060.21L1484.06,1059.95L1484.75,1060.48L1485.44,1059.65L1486.13,1059.37L1486.83,1060.32L1487.52,1059.81L1488.21,1059.30L1488.90,1058.80L1489.60,1059.23L1490.29,1059.68L1490.98,1060.08L1491.67,1059.97L1492.37,1059.84L1493.06,1059.47L1493.75,1059.56" fill="none" stroke="#b0583e" stroke-width="1" stroke-opacity="0.85"/>
</svg>
<div class="t" style="left:200px;width:82px;text-align:right;top:1054.5px;font-size:11px;font-weight:700;color:#111">0</div>
<div class="t" style="left:200px;width:82px;text-align:right;top:899.5px;font-size:11px;font-weight:700;color:#111">10</div>
<div class="t" style="left:200px;width:82px;text-align:right;top:744.5px;font-size:11px;font-weight:700;color:#111">20</div>
<div class="t" style="left:200px;width:82px;text-align:right;top:589.5px;font-size:11px;font-weight:700;color:#111">30</div>
<div class="t" style="left:200px;width:82px;text-align:right;top:434.5px;font-size:11px;font-weight:700;color:#111">40</div>
<div class="t" style="left:200px;width:82px;text-align:right;top:279.5px;font-size:11px;font-weight:700;color:#111">50</div>
<div class="t" style="left:276.5px;width:80px;text-align:center;top:1071.5px;font-size:11px;font-weight:700;color:#111">200</div>
<div class="t" style="left:415.0px;width:80px;text-align:center;top:1071.5px;font-size:11px;font-weight:700;color:#111">300</div>
<div class="t" style="left:553.5px;width:80px;text-align:center;top:1071.5px;font-size:11px;font-weight:700;color:#111">400</div>
<div class="t" style="left:692.0px;width:80px;text-align:center;top:1071.5px;font-size:11px;font-weight:700;color:#111">500</div>
<div class="t" style="left:830.5px;width:80px;text-align:center;top:1071.5px;font-size:11px;font-weight:700;color:#111">600</div>
<div class="t" style="left:969.0px;width:80px;text-align:center;top:1071.5px;font-size:11px;font-weight:700;color:#111">700</div>
<div class="t" style="left:1107.5px;width:80px;text-align:center;top:1071.5px;font-size:11px;font-weight:700;color:#111">800</div>
<div class="t" style="left:1246.0px;width:80px;text-align:center;top:1071.5px;font-size:11px;font-weight:700;color:#111">900</div>
<div class="t" style="left:1384.5px;width:80px;text-align:center;top:1071.5px;font-size:11px;font-weight:700;color:#111">1000</div>
<div class="t" style="left:1533px;top:1072px;font-size:11.5px;font-weight:700;color:#111">nm</div>
<div class="t" style="left:244.5px;top:143.5px;font-size:12.3px;font-weight:700;color:#111">mW/m²/nm</div>
<div style="position:absolute;left:1580px;top:84px;width:468px;height:23px;background:#acacac"></div>
<div class="t" style="left:1584.4px;top:88.8px;font-size:11.5px;color:#1c1c1c;font-weight:400;">Results</div>
<svg style="position:absolute;left:0;top:0" width="2048" height="110"><rect x="2019.8000000000002" y="91.2" width="5.2" height="5.2" fill="none" stroke="#000" stroke-width="1.3"/><rect x="2019.2" y="90.60000000000001" width="6.5" height="1.9" fill="#000"/><rect x="2017.5" y="94.5" width="5.3" height="5.3" fill="#b8b8b8" stroke="#000" stroke-width="1.3"/><rect x="2016.9" y="93.9" width="6.5" height="2" fill="#000"/><path d="M2034.2,91.5 L2042.4,99.1 M2042.4,91.5 L2034.2,99.1" stroke="#000" stroke-width="1.9"/></svg>
<div class="t" style="left:1585.5px;top:118.1px;font-size:11.4px;color:#1a1a1a;font-weight:400;">Norm</div>
<div style="position:absolute;left:1672.5px;top:111px;width:371px;height:20.5px;background:#cacaca"></div>
<div class="t" style="left:1677.0px;top:116.8px;font-size:11.4px;color:#a3a3a3;font-weight:400;">CIE</div>
<svg style="position:absolute;left:2027px;top:117px" width="12" height="10"><path d="M2,2 L10,2 L6,7 Z" fill="#dedede"/><path d="M6,7 L10,2 L10.8,3 L6.5,8.2 Z" fill="#f6f6f6"/></svg>
<div class="t" style="left:1585.5px;top:138.1px;font-size:11.4px;color:#1a1a1a;font-weight:400;">Range Min</div>
<div class="t" style="left:1585.5px;top:157.1px;font-size:11.4px;color:#1a1a1a;font-weight:400;">Range Max</div>
<div style="position:absolute;left:1672.5px;top:134.5px;width:371px;height:16px;box-sizing:border-box;border:1px solid #dedede;background:#f3f3f3"></div>
<div class="t" style="left:1676.0px;top:137.1px;font-size:11.4px;color:#a3a3a3;font-weight:400;">200,00</div>
<svg style="position:absolute;left:2029px;top:135.5px" width="12" height="14"><path d="M3,5 L6,2 L9,5 Z" fill="#555"/><path d="M3,9 L6,12 L9,9 Z" fill="#555"/></svg>
<div style="position:absolute;left:1672.5px;top:153.5px;width:371px;height:16px;box-sizing:border-box;border:1px solid #dedede;background:#f3f3f3"></div>
<div class="t" style="left:1676.0px;top:156.1px;font-size:11.4px;color:#a3a3a3;font-weight:400;">1050,00</div>
<svg style="position:absolute;left:2029px;top:154.5px" width="12" height="14"><path d="M3,5 L6,2 L9,5 Z" fill="#555"/><path d="M3,9 L6,12 L9,9 Z" fill="#555"/></svg>
<div style="position:absolute;left:1586px;top:173px;width:13.5px;height:13.5px;box-sizing:border-box;border:1px solid #c6c6c6;background:#fff"></div>
<div class="t" style="left:1604.5px;top:174.8px;font-size:11.4px;color:#a3a3a3;font-weight:400;">Lock range</div>
<div style="position:absolute;left:1674px;top:172px;width:370px;height:22px;background:#cacaca"></div>
<div class="t" style="left:1674px;width:370px;text-align:center;top:178px;font-size:11.4px;color:#a3a3a3">Reset range</div>
<div class="t" style="left:1585.5px;top:201.6px;font-size:11.4px;color:#1a1a1a;font-weight:400;">Ranges</div>
<div style="position:absolute;left:1672.7px;top:195px;width:371px;height:21px;background:#cacaca"></div>
<div class="t" style="left:1677.0px;top:201.3px;font-size:11.4px;color:#a3a3a3;font-weight:400;">400-500</div>
<svg style="position:absolute;left:2027px;top:200px" width="12" height="10"><path d="M2,2 L10,2 L6,7 Z" fill="#dedede"/><path d="M6,7 L10,2 L10.8,3 L6.5,8.2 Z" fill="#f6f6f6"/></svg>
<div style="position:absolute;left:1579.5px;top:223px;width:468px;height:875px;box-sizing:border-box;border:1px solid #a8a8a8;background:#fff"></div>
<div class="t" style="left:1584.5px;top:231.1px;font-size:11.3px;color:#1a1a1a;font-weight:400;">Name</div>
<div class="t" style="left:1771.0px;top:231.1px;font-size:11.3px;color:#1a1a1a;font-weight:400;">Value</div>
<div style="position:absolute;left:1767px;top:226px;width:1px;height:18px;background:#eeeeee"></div>
<svg style="position:absolute;left:1586px;top:246px" width="12" height="16"><path d="M2,6 L6,10 L10,6" fill="none" stroke="#2a2a2a" stroke-width="1.9"/></svg>
<div class="t" style="left:1604.5px;top:248.8px;font-size:11.4px;color:#1c1c1c;font-weight:400;">Results</div>
<div style="position:absolute;left:1583px;top:262px;width:462px;height:16px;background:#f6f6f6"></div>
<svg style="position:absolute;left:1607px;top:262px" width="12" height="16"><path d="M4,4 L8,8 L4,12" fill="none" stroke="#8c8c8c" stroke-width="1.4"/></svg>
<div class="t" style="left:1626.0px;top:264.8px;font-size:11.4px;color:#1c1c1c;font-weight:400;">CIE 1931 2° observer</div>
<svg style="position:absolute;left:1607px;top:278px" width="12" height="16"><path d="M4,4 L8,8 L4,12" fill="none" stroke="#8c8c8c" stroke-width="1.4"/></svg>
<div class="t" style="left:1626.0px;top:280.8px;font-size:11.4px;color:#1c1c1c;font-weight:400;">CIE 1964 10° observer</div>
<div style="position:absolute;left:1583px;top:294px;width:462px;height:16px;background:#f6f6f6"></div>
<svg style="position:absolute;left:1607px;top:294px" width="12" height="16"><path d="M4,4 L8,8 L4,12" fill="none" stroke="#8c8c8c" stroke-width="1.4"/></svg>
<div class="t" style="left:1626.0px;top:296.8px;font-size:11.4px;color:#1c1c1c;font-weight:400;">Other</div>
<svg style="position:absolute;left:1607px;top:310px" width="12" height="16"><path d="M4,4 L8,8 L4,12" fill="none" stroke="#8c8c8c" stroke-width="1.4"/></svg>
<div class="t" style="left:1626.0px;top:312.8px;font-size:11.4px;color:#1c1c1c;font-weight:400;">Photobiological Safety</div>
<div style="position:absolute;left:1583px;top:326px;width:462px;height:16px;background:#f6f6f6"></div>
<svg style="position:absolute;left:1607px;top:326px" width="12" height="16"><path d="M2,6 L6,10 L10,6" fill="none" stroke="#2a2a2a" stroke-width="1.9"/></svg>
<div class="t" style="left:1626.0px;top:328.8px;font-size:11.4px;color:#1c1c1c;font-weight:400;">Rendering Indices</div>
<div class="t" style="left:1647.0px;top:344.8px;font-size:11.4px;color:#1c1c1c;font-weight:400;">Ra</div>
<div class="t" style="left:1771.0px;top:344.8px;font-size:11.4px;color:#1c1c1c;font-weight:400;">76,7</div>
<div style="position:absolute;left:1583px;top:358px;width:462px;height:16px;background:#f6f6f6"></div>
<div class="t" style="left:1647.0px;top:360.8px;font-size:11.4px;color:#1c1c1c;font-weight:400;">R₁</div>
<div class="t" style="left:1771.0px;top:360.8px;font-size:11.4px;color:#1c1c1c;font-weight:400;">78,9</div>
<div class="t" style="left:1647.0px;top:376.8px;font-size:11.4px;color:#1c1c1c;font-weight:400;">R₂</div>
<div class="t" style="left:1771.0px;top:376.8px;font-size:11.4px;color:#1c1c1c;font-weight:400;">78,6</div>
<div style="position:absolute;left:1583px;top:390px;width:462px;height:16px;background:#f6f6f6"></div>
<div class="t" style="left:1647.0px;top:392.8px;font-size:11.4px;color:#1c1c1c;font-weight:400;">R₃</div>
<div class="t" style="left:1771.0px;top:392.8px;font-size:11.4px;color:#1c1c1c;font-weight:400;">73,2</div>
<div class="t" style="left:1647.0px;top:408.8px;font-size:11.4px;color:#1c1c1c;font-weight:400;">R₄</div>
<div class="t" style="left:1771.0px;top:408.8px;font-size:11.4px;color:#1c1c1c;font-weight:400;">80,4</div>
<div style="position:absolute;left:1583px;top:422px;width:462px;height:16px;background:#f6f6f6"></div>
<div class="t" style="left:1647.0px;top:424.8px;font-size:11.4px;color:#1c1c1c;font-weight:400;">R₅</div>
<div class="t" style="left:1771.0px;top:424.8px;font-size:11.4px;color:#1c1c1c;font-weight:400;">78,6</div>
<div class="t" style="left:1647.0px;top:440.8px;font-size:11.4px;color:#1c1c1c;font-weight:400;">R₆</div>
<div class="t" style="left:1771.0px;top:440.8px;font-size:11.4px;color:#1c1c1c;font-weight:400;">68,6</div>
<div style="position:absolute;left:1583px;top:454px;width:462px;height:16px;background:#f6f6f6"></div>
<div class="t" style="left:1647.0px;top:456.8px;font-size:11.4px;color:#1c1c1c;font-weight:400;">R₇</div>
<div class="t" style="left:1771.0px;top:456.8px;font-size:11.4px;color:#1c1c1c;font-weight:400;">82,7</div>
<div class="t" style="left:1647.0px;top:472.8px;font-size:11.4px;color:#1c1c1c;font-weight:400;">R₈</div>
<div class="t" style="left:1771.0px;top:472.8px;font-size:11.4px;color:#1c1c1c;font-weight:400;">72,5</div>
<div style="position:absolute;left:1583px;top:486px;width:462px;height:16px;background:#f6f6f6"></div>
<div class="t" style="left:1647.0px;top:488.8px;font-size:11.4px;color:#1c1c1c;font-weight:400;">R₉</div>
<div class="t" style="left:1771.0px;top:488.8px;font-size:11.4px;color:#1c1c1c;font-weight:400;">6,5</div>
<div class="t" style="left:1647.0px;top:504.8px;font-size:11.4px;color:#1c1c1c;font-weight:400;">R₁₀</div>
<div class="t" style="left:1771.0px;top:504.8px;font-size:11.4px;color:#1c1c1c;font-weight:400;">44,3</div>
<div style="position:absolute;left:1583px;top:518px;width:462px;height:16px;background:#f6f6f6"></div>
<div class="t" style="left:1647.0px;top:520.8px;font-size:11.4px;color:#1c1c1c;font-weight:400;">R₁₁</div>
<div class="t" style="left:1771.0px;top:520.8px;font-size:11.4px;color:#1c1c1c;font-weight:400;">78,9</div>
<div class="t" style="left:1647.0px;top:536.8px;font-size:11.4px;color:#1c1c1c;font-weight:400;">R₁₂</div>
<div class="t" style="left:1771.0px;top:536.8px;font-size:11.4px;color:#1c1c1c;font-weight:400;">44,7</div>
<div style="position:absolute;left:1583px;top:550px;width:462px;height:16px;background:#f6f6f6"></div>
<div class="t" style="left:1647.0px;top:552.8px;font-size:11.4px;color:#1c1c1c;font-weight:400;">R₁₃</div>
<div class="t" style="left:1771.0px;top:552.8px;font-size:11.4px;color:#1c1c1c;font-weight:400;">77,9</div>
<div class="t" style="left:1647.0px;top:568.8px;font-size:11.4px;color:#1c1c1c;font-weight:400;">R₁₄</div>
<div class="t" style="left:1771.0px;top:568.8px;font-size:11.4px;color:#1c1c1c;font-weight:400;">84,5</div>
<div style="position:absolute;left:1583px;top:582px;width:462px;height:16px;background:#f6f6f6"></div>
<div class="t" style="left:1647.0px;top:584.8px;font-size:11.4px;color:#1c1c1c;font-weight:400;">R₁₅</div>
<div class="t" style="left:1771.0px;top:584.8px;font-size:11.4px;color:#1c1c1c;font-weight:400;">78,0</div>
<svg style="position:absolute;left:1607px;top:598px" width="12" height="16"><path d="M4,4 L8,8 L4,12" fill="none" stroke="#8c8c8c" stroke-width="1.4"/></svg>
<div class="t" style="left:1626.0px;top:600.8px;font-size:11.4px;color:#1c1c1c;font-weight:400;">Metamerism Indices</div>
<div style="position:absolute;left:1583px;top:614px;width:462px;height:16px;background:#f6f6f6"></div>
<svg style="position:absolute;left:1607px;top:614px" width="12" height="16"><path d="M4,4 L8,8 L4,12" fill="none" stroke="#8c8c8c" stroke-width="1.4"/></svg>
<div class="t" style="left:1626.0px;top:616.8px;font-size:11.4px;color:#1c1c1c;font-weight:400;">TM-30-15 Main</div>
<svg style="position:absolute;left:1607px;top:630px" width="12" height="16"><path d="M4,4 L8,8 L4,12" fill="none" stroke="#8c8c8c" stroke-width="1.4"/></svg>
<div class="t" style="left:1626.0px;top:632.8px;font-size:11.4px;color:#1c1c1c;font-weight:400;">TM-30-15 Hue Bin Fidelit...</div>
<div style="position:absolute;left:1583px;top:646px;width:462px;height:16px;background:#f6f6f6"></div>
<svg style="position:absolute;left:1607px;top:646px" width="12" height="16"><path d="M4,4 L8,8 L4,12" fill="none" stroke="#8c8c8c" stroke-width="1.4"/></svg>
<div class="t" style="left:1626.0px;top:648.8px;font-size:11.4px;color:#1c1c1c;font-weight:400;">TM-30-15 Hue Bin Chang...</div>
<svg style="position:absolute;left:1607px;top:662px" width="12" height="16"><path d="M4,4 L8,8 L4,12" fill="none" stroke="#8c8c8c" stroke-width="1.4"/></svg>
<div class="t" style="left:1626.0px;top:664.8px;font-size:11.4px;color:#1c1c1c;font-weight:400;">TM-30-15 Fidelity Index ...</div>
<div style="position:absolute;left:1583px;top:678px;width:462px;height:16px;background:#f6f6f6"></div>
<svg style="position:absolute;left:1607px;top:678px" width="12" height="16"><path d="M2,6 L6,10 L10,6" fill="none" stroke="#2a2a2a" stroke-width="1.9"/></svg>
<div class="t" style="left:1626.0px;top:680.8px;font-size:11.4px;color:#1c1c1c;font-weight:400;">Human Centric Lighting</div>
<div class="t" style="left:1647.0px;top:696.8px;font-size:11.4px;color:#1c1c1c;font-weight:400;">EML</div>
<div class="t" style="left:1771.0px;top:696.8px;font-size:11.4px;color:#1c1c1c;font-weight:400;">-</div>
<div style="position:absolute;left:1583px;top:710px;width:462px;height:16px;background:#f6f6f6"></div>
<div class="t" style="left:1647.0px;top:712.8px;font-size:11.4px;color:#1c1c1c;font-weight:400;">Melanopic ratio</div>
<div class="t" style="left:1771.0px;top:712.8px;font-size:11.4px;color:#1c1c1c;font-weight:400;">-</div>
<div style="position:absolute;left:323.5px;top:1101px;width:1px;height:22px;background:#d8d8d8"></div>
<div style="position:absolute;left:328px;top:1101.5px;width:1660px;height:22px;box-sizing:border-box;border:1px solid #bdbdbd;border-top-width:2px;background:#e6e5e8"></div>
<div style="position:absolute;left:1990px;top:1102px;width:1px;height:20px;background:#e4e4e4"></div>
<div class="t" style="left:1997.5px;top:1108.1px;font-size:11.5px;color:#1c1c1c;font-weight:400;">0%</div>
<div style="position:absolute;left:0px;top:1123.5px;width:50px;height:3px;background:#333"></div>
<div style="position:absolute;left:418px;top:1123.5px;width:1630px;height:3px;background:#3a3a3e"></div>
</body></html>
